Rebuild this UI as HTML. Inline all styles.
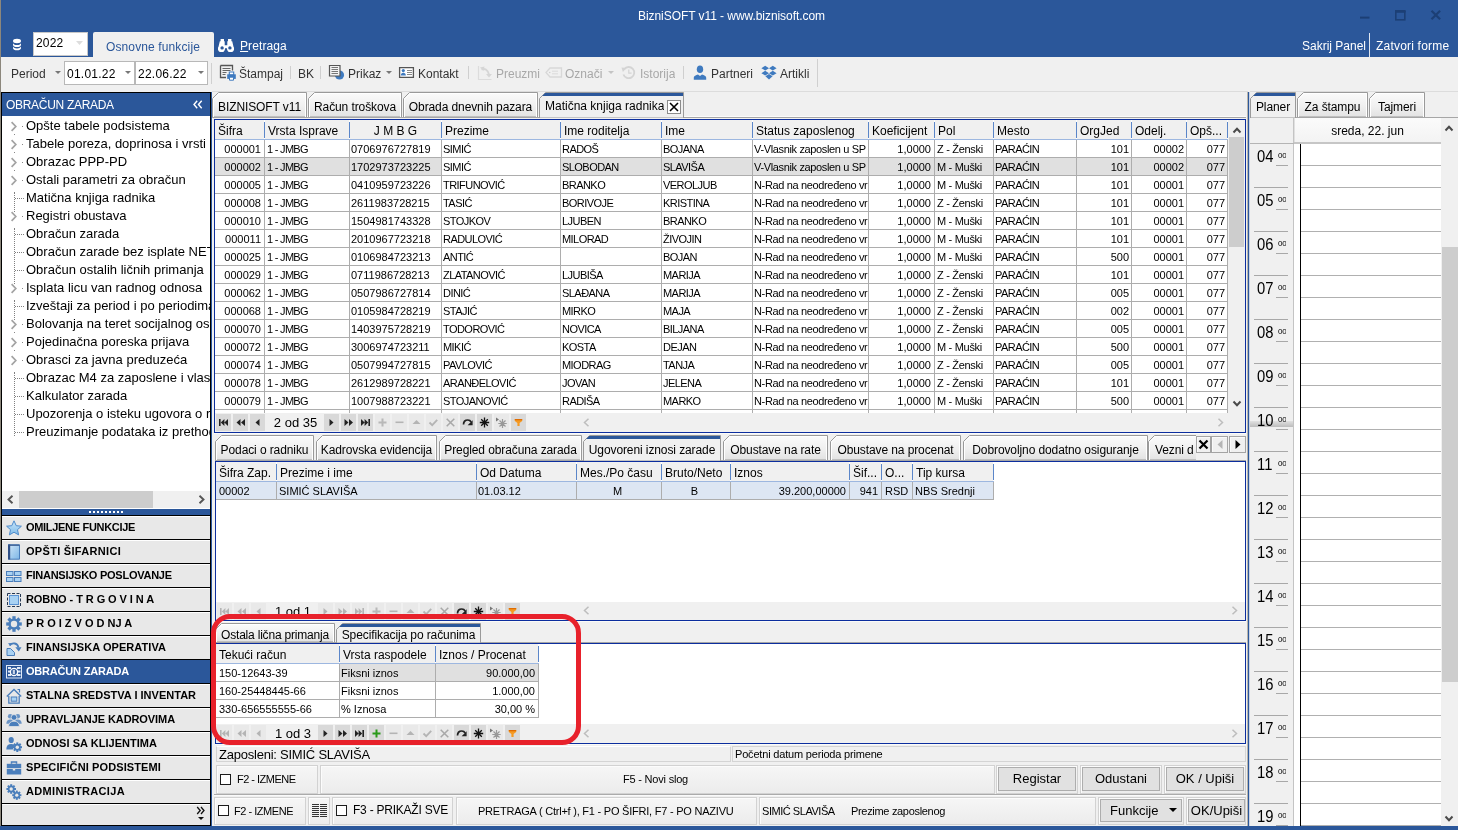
<!DOCTYPE html><html><head><meta charset="utf-8"><title>BizniSOFT v11</title><style>
html,body{margin:0;padding:0}
body{width:1458px;height:830px;overflow:hidden;position:relative;background:#f0f0f0;font-family:"Liberation Sans","DejaVu Sans",sans-serif;font-size:12px;color:#000}
div,span{box-sizing:border-box}
.a{position:absolute;white-space:nowrap;overflow:hidden}
.t11{font-size:11px;line-height:17px}
.t12{font-size:12px;line-height:16px}
.t13{font-size:13px;line-height:17px}
.w{color:#fff}
.cell{position:absolute;white-space:nowrap;overflow:hidden;font-size:11px;line-height:18px;height:18px;border-right:1px solid #adadad;border-bottom:1px solid #adadad;padding:0 3px 0 3px;background:#fff}
.cell.r{text-align:right;padding-right:3px}
.cell.c{text-align:center}
.hd{position:absolute;white-space:nowrap;overflow:hidden;font-size:12px;line-height:22px;height:19px;padding-left:3px;background:#f0f0f0}
.hsep{position:absolute;width:1px;background:#5b86c9}
.tab{position:absolute;white-space:nowrap;overflow:hidden;font-size:12px;line-height:20px;text-align:center;background:linear-gradient(#f6f6f6,#ebebeb);border:1px solid #a0a0a0;border-bottom:none;box-shadow:inset 1px 1px 0 #fff, inset -1px 0 0 #fff}
.tab.sel{background:#f0f0f0;border-top:3px solid #2b579a;line-height:17px}
.nb{position:absolute;width:15px;height:17px;background:#e9e9e9}
.nb.on{background:#d9d9d9}
.navbtn{position:absolute;left:2px;width:208px;height:24px;background:#e8e8e8;border-top:1px solid #fff;border-bottom:1px solid #000;font-weight:bold;font-size:11px;line-height:21px;padding-left:24px;white-space:nowrap;overflow:hidden}
.navbtn.sel{background:#2b579a;color:#fff;border-top-color:#2b579a}
.tree{position:absolute;left:26px;font-size:13px;line-height:18px;white-space:nowrap}
.btn{position:absolute;background:#e1e1e1;border:1px solid #adadad;font-size:13px;text-align:center;white-space:nowrap;overflow:hidden}
.pnl{position:absolute;border:1px solid #d2d2d2;box-shadow:inset 1px 1px 0 #fcfcfc;background:linear-gradient(#f6f6f6,#ececec)}
.chk{position:absolute;width:11px;height:11px;border:1px solid #1c1c1c;background:#fff}
</style></head><body>
<div class="a" style="left:0px;top:0px;width:1458px;height:57px;background:#2b579a"></div>
<div class="a" style="left:0px;top:0px;width:1px;height:830px;background:#8c877c"></div>
<div class="a t12 w" style="left:638px;top:8px;letter-spacing:-0.06px">BizniSOFT v11 - www.biznisoft.com</div>
<svg class="a" style="left:1355px;top:5px" width="100" height="24" viewBox="0 0 100 24"><g stroke="#1c3f75" stroke-width="1.6" fill="none"><path d="M5 12.6h9.5" stroke-width="2"/><rect x="40.8" y="6.8" width="9" height="8"/><path d="M40 6.2h10.6" stroke-width="2.4"/><path d="M76.5 5.7l8.6 8.6M85.1 5.7l-8.6 8.6" stroke-width="2.2"/></g></svg>
<svg class="a" style="left:12px;top:38px" width="10" height="13" viewBox="0 0 10 13"><g fill="#fff"><ellipse cx="5" cy="3" rx="4" ry="2.2"/><path d="M1 5c0 1.2 1.8 2.1 4 2.1s4-0.9 4-2.1v1.9c0 1.2-1.8 2.1-4 2.1s-4-0.9-4-2.1z"/><path d="M1 8.3c0 1.2 1.8 2.1 4 2.1s4-0.9 4-2.1v1.9c0 1.2-1.8 2.1-4 2.1s-4-0.9-4-2.1z"/></g></svg>
<div class="a" style="left:33px;top:32px;width:55px;height:24px;background:#fff;border:1px solid #c8c8c8"></div>
<div class="a t12" style="left:36px;top:36px;line-height:15px;letter-spacing:0.2px">2022</div>
<svg class="a" style="left:76px;top:41px" width="7" height="4"><path d="M0 0h7l-3.5 4z" fill="#ddd"/></svg>
<div class="a" style="left:93px;top:32px;width:121px;height:25px;background:#f0f0f0;border-radius:2px 2px 0 0"></div>
<div class="a t12" style="left:106px;top:39px;color:#2b579a;line-height:16px;letter-spacing:0.12px">Osnovne funkcije</div>
<svg class="a" style="left:218px;top:38px" width="16" height="14" viewBox="0 0 16 14"><g fill="#fff"><path d="M2.6 1h3.4v3h-3.4zM10 1h3.4v3H10z"/><path d="M1.8 3.2h4.9v4h2.6v-4h4.9l1.3 5.5a3.6 3.6 0 1 1-6.5 1.5h-2a3.6 3.6 0 1 1-6.5-1.5z"/></g><circle cx="4.1" cy="9.9" r="1.7" fill="#2b579a"/><circle cx="11.9" cy="9.9" r="1.7" fill="#2b579a"/></svg>
<div class="a t12 w" style="left:240px;top:38px;line-height:16px;letter-spacing:0.1px"><u>P</u>retraga</div>
<div class="a t12 w" style="left:1302px;top:38px;line-height:16px">Sakrij Panel</div>
<div class="a" style="left:1369px;top:33px;width:1px;height:24px;background:#dfe6f0"></div>
<div class="a t12 w" style="left:1376px;top:38px;line-height:16px;letter-spacing:0.2px">Zatvori forme</div>
<div class="a t12" style="left:11px;top:66px;color:#333;line-height:16px">Period</div>
<svg class="a" style="left:55px;top:71px" width="6" height="3"><path d="M0 0h6l-3 3z" fill="#777"/></svg>
<div class="a" style="left:64px;top:61px;width:71px;height:24px;background:#fff;border:1px solid #b8b8b8"></div>
<div class="a t12" style="left:67px;top:66px;line-height:16px;letter-spacing:0.25px">01.01.22</div>
<svg class="a" style="left:125px;top:71px" width="6" height="3"><path d="M0 0h6l-3 3z" fill="#777"/></svg>
<div class="a" style="left:135px;top:61px;width:73px;height:24px;background:#fff;border:1px solid #b8b8b8"></div>
<div class="a t12" style="left:138px;top:66px;line-height:16px;letter-spacing:0.25px">22.06.22</div>
<svg class="a" style="left:198px;top:71px" width="6" height="3"><path d="M0 0h6l-3 3z" fill="#777"/></svg>
<div class="a" style="left:211px;top:63px;width:1px;height:21px;background:#d0d0d0"></div>
<div class="a" style="left:817px;top:59px;width:1px;height:28px;background:#d0d0d0"></div>
<div class="a" style="left:290px;top:66px;width:1px;height:13px;background:#cfcfcf"></div>
<div class="a" style="left:320px;top:66px;width:1px;height:13px;background:#cfcfcf"></div>
<div class="a" style="left:468px;top:66px;width:1px;height:13px;background:#cfcfcf"></div>
<div class="a" style="left:683px;top:66px;width:1px;height:13px;background:#cfcfcf"></div>
<div class="a t12" style="left:239px;top:66px;color:#333;line-height:16px">Štampaj</div>
<div class="a t12" style="left:298px;top:66px;color:#333;line-height:16px">BK</div>
<div class="a t12" style="left:348px;top:66px;color:#333;line-height:16px">Prikaz</div>
<div class="a t12" style="left:418px;top:66px;color:#333;line-height:16px">Kontakt</div>
<div class="a t12" style="left:496px;top:66px;color:#a8a8a8;line-height:16px">Preuzmi</div>
<div class="a t12" style="left:565px;top:66px;color:#a8a8a8;line-height:16px">Označi</div>
<div class="a t12" style="left:640px;top:66px;color:#a8a8a8;line-height:16px">Istorija</div>
<div class="a t12" style="left:711px;top:66px;color:#333;line-height:16px">Partneri</div>
<div class="a t12" style="left:780px;top:66px;color:#333;line-height:16px">Artikli</div>
<svg class="a" style="left:219px;top:64px" width="19" height="18" viewBox="0 0 19 18"><path d="M1.5 1.5h12v5M7 13.5H1.5v-12" stroke="#555" stroke-width="1.3" fill="none"/><path d="M3.5 4.5h8M3.5 6.5h8M3.5 8.5h4M3.5 10.5h3" stroke="#666" stroke-width="1"/><path d="M10.3 8h4.4v3h-4.4z" fill="#fff" stroke="#3f7abf" stroke-width="1.1"/><path d="M8.2 10.3h8.6v4.6H8.2z" fill="#3f7abf"/><path d="M10.5 13.2h4v3h-4z" fill="#fff" stroke="#3f7abf" stroke-width="1"/></svg>
<svg class="a" style="left:328px;top:64px" width="18" height="17" viewBox="0 0 18 17"><circle cx="11.5" cy="11" r="4.6" fill="#3f7abf"/><path d="M1.5 1.5h10.5v10.5H1.5z" fill="#f4f4f4" stroke="#555" stroke-width="1.2"/><path d="M3.5 3.5h6.5M3.5 5.5h6.5M3.5 7.5h6.5M3.5 9.5h6.5" stroke="#777" stroke-width="1"/></svg>
<svg class="a" style="left:398px;top:66px" width="17" height="13" viewBox="0 0 17 13"><path d="M1.6 1.6h13.8v9.8H1.6z" fill="#fff" stroke="#555" stroke-width="1.3"/><circle cx="5.3" cy="4.6" r="1.6" fill="#3f7abf"/><path d="M2.8 9.6c0-2 1-2.8 2.5-2.8s2.5 0.8 2.5 2.8z" fill="#3f7abf"/><path d="M9 4.5h5M9 6.5h5M9 8.5h5" stroke="#888" stroke-width="1"/></svg>
<svg class="a" style="left:477px;top:64px" width="17" height="18" viewBox="0 0 17 18"><path d="M1.5 2v13.5h13" stroke="#dcdcdc" stroke-width="1.2" fill="none"/><path d="M4.5 5.5c3.5-1.5 6.5 0.5 7.5 5" stroke="#d6d6d6" stroke-width="1.8" fill="none"/><path d="M9 10h6l-3 3.5z" fill="#d6d6d6"/><path d="M3 3.5l4.5-1-1 4.5z" fill="#d6d6d6"/></svg>
<svg class="a" style="left:545px;top:66px" width="18" height="13" viewBox="0 0 18 13"><path d="M1 6.5L5 2h11.5v9H5z" fill="none" stroke="#d8d8d8" stroke-width="1.3"/><path d="M7 5.2h6M7 7.8h6" stroke="#dadada" stroke-width="1"/><circle cx="4.7" cy="6.5" r="0.8" fill="#d0d0d0"/></svg>
<svg class="a" style="left:621px;top:65px" width="15" height="15" viewBox="0 0 15 15"><path d="M3.2 4.2A5.6 5.6 0 1 1 2.4 9.5" stroke="#d4d4d4" stroke-width="1.8" fill="none"/><path d="M0.5 2.5l5 0.6-3.6 3.8z" fill="#d4d4d4"/><path d="M7.8 4.5v3.6h2.8" stroke="#d4d4d4" stroke-width="1.2" fill="none"/></svg>
<svg class="a" style="left:693px;top:65px" width="14" height="15" viewBox="0 0 14 15"><ellipse cx="7" cy="4.2" rx="3.2" ry="3.8" fill="#3f7abf"/><path d="M0.8 14.8v-2.2c0-1.8 2.2-2.6 4.2-3.2l2 1.6 2-1.6c2 0.6 4.2 1.4 4.2 3.2v2.2z" fill="#3f7abf"/></svg>
<svg class="a" style="left:761px;top:65px" width="16" height="15" viewBox="0 0 16 15"><g fill="#3f7abf"><path d="M4.2 0.8L8 3.2 4.2 5.6 0.4 3.2z"/><path d="M11.8 0.8l3.8 2.4-3.8 2.4L8 3.2z"/><path d="M4.2 5.8L8 8.2 4.2 10.6 0.4 8.2z"/><path d="M11.8 5.8l3.8 2.4-3.8 2.4L8 8.2z"/><path d="M8 9l3.6 2.3L8 14.4 4.4 11.3z"/></g></svg>
<div class="a" style="left:1px;top:92px;width:210px;height:734px;background:#fff;border:1px solid #000"></div>
<div class="a" style="left:211px;top:92px;width:1px;height:734px;background:#2b579a"></div>
<div class="a" style="left:2px;top:93px;width:208px;height:23px;background:#2b579a"></div>
<div class="a t12 w" style="left:6px;top:96px;line-height:18px;letter-spacing:-0.3px">OBRAČUN ZARADA</div>
<svg class="a" style="left:193px;top:100px" width="10" height="9"><path d="M4.2 0.8L1 4.5l3.2 3.7M8.7 0.8L5.5 4.5l3.2 3.7" stroke="#fff" stroke-width="1.4" fill="none"/></svg>
<div class="a" style="left:2px;top:116px;width:208px;height:375px">
<div class="tree" style="left:24px;top:1px">Opšte tabele podsistema</div>
<svg class="a" style="left:8px;top:5px" width="8" height="11"><path d="M1.6 1.2l4.2 4.3-4.2 4.3" stroke="#a3a3a3" stroke-width="1.7" fill="none"/></svg>
<div class="a" style="left:20px;top:10px;width:1px;height:1px;background:#888"></div>
<div class="a" style="left:12px;top:18px;width:1px;height:1px;background:#888"></div>
<div class="tree" style="left:24px;top:19px">Tabele poreza, doprinosa i vrsti</div>
<svg class="a" style="left:8px;top:23px" width="8" height="11"><path d="M1.6 1.2l4.2 4.3-4.2 4.3" stroke="#a3a3a3" stroke-width="1.7" fill="none"/></svg>
<div class="a" style="left:20px;top:28px;width:1px;height:1px;background:#888"></div>
<div class="a" style="left:12px;top:36px;width:1px;height:1px;background:#888"></div>
<div class="tree" style="left:24px;top:37px">Obrazac PPP-PD</div>
<svg class="a" style="left:8px;top:41px" width="8" height="11"><path d="M1.6 1.2l4.2 4.3-4.2 4.3" stroke="#a3a3a3" stroke-width="1.7" fill="none"/></svg>
<div class="a" style="left:20px;top:46px;width:1px;height:1px;background:#888"></div>
<div class="a" style="left:12px;top:54px;width:1px;height:1px;background:#888"></div>
<div class="tree" style="left:24px;top:55px">Ostali parametri za obračun</div>
<svg class="a" style="left:8px;top:59px" width="8" height="11"><path d="M1.6 1.2l4.2 4.3-4.2 4.3" stroke="#a3a3a3" stroke-width="1.7" fill="none"/></svg>
<div class="a" style="left:20px;top:64px;width:1px;height:1px;background:#888"></div>
<div class="tree" style="left:24px;top:73px">Matična knjiga radnika</div>
<div class="a" style="left:13px;top:82px;width:9px;height:0;border-top:1px dotted #808080"></div>
<div class="tree" style="left:24px;top:91px">Registri obustava</div>
<svg class="a" style="left:8px;top:95px" width="8" height="11"><path d="M1.6 1.2l4.2 4.3-4.2 4.3" stroke="#a3a3a3" stroke-width="1.7" fill="none"/></svg>
<div class="a" style="left:20px;top:100px;width:1px;height:1px;background:#888"></div>
<div class="tree" style="left:24px;top:109px">Obračun zarada</div>
<div class="a" style="left:13px;top:118px;width:9px;height:0;border-top:1px dotted #808080"></div>
<div class="tree" style="left:24px;top:127px">Obračun zarade bez isplate NETO</div>
<div class="a" style="left:13px;top:136px;width:9px;height:0;border-top:1px dotted #808080"></div>
<div class="tree" style="left:24px;top:145px">Obračun ostalih ličnih primanja</div>
<div class="a" style="left:13px;top:154px;width:9px;height:0;border-top:1px dotted #808080"></div>
<div class="tree" style="left:24px;top:163px">Isplata licu van radnog odnosa</div>
<svg class="a" style="left:8px;top:167px" width="8" height="11"><path d="M1.6 1.2l4.2 4.3-4.2 4.3" stroke="#a3a3a3" stroke-width="1.7" fill="none"/></svg>
<div class="a" style="left:20px;top:172px;width:1px;height:1px;background:#888"></div>
<div class="tree" style="left:24px;top:181px">Izveštaji za period i po periodima</div>
<div class="a" style="left:13px;top:190px;width:9px;height:0;border-top:1px dotted #808080"></div>
<div class="tree" style="left:24px;top:199px">Bolovanja na teret socijalnog osiguranja</div>
<svg class="a" style="left:8px;top:203px" width="8" height="11"><path d="M1.6 1.2l4.2 4.3-4.2 4.3" stroke="#a3a3a3" stroke-width="1.7" fill="none"/></svg>
<div class="a" style="left:20px;top:208px;width:1px;height:1px;background:#888"></div>
<div class="a" style="left:12px;top:216px;width:1px;height:1px;background:#888"></div>
<div class="tree" style="left:24px;top:217px">Pojedinačna poreska prijava</div>
<svg class="a" style="left:8px;top:221px" width="8" height="11"><path d="M1.6 1.2l4.2 4.3-4.2 4.3" stroke="#a3a3a3" stroke-width="1.7" fill="none"/></svg>
<div class="a" style="left:20px;top:226px;width:1px;height:1px;background:#888"></div>
<div class="a" style="left:12px;top:234px;width:1px;height:1px;background:#888"></div>
<div class="tree" style="left:24px;top:235px">Obrasci za javna preduzeća</div>
<svg class="a" style="left:8px;top:239px" width="8" height="11"><path d="M1.6 1.2l4.2 4.3-4.2 4.3" stroke="#a3a3a3" stroke-width="1.7" fill="none"/></svg>
<div class="a" style="left:20px;top:244px;width:1px;height:1px;background:#888"></div>
<div class="tree" style="left:24px;top:253px">Obrazac M4 za zaposlene i vlasnike</div>
<div class="a" style="left:13px;top:262px;width:9px;height:0;border-top:1px dotted #808080"></div>
<div class="tree" style="left:24px;top:271px">Kalkulator zarada</div>
<div class="a" style="left:13px;top:280px;width:9px;height:0;border-top:1px dotted #808080"></div>
<div class="tree" style="left:24px;top:289px">Upozorenja o isteku ugovora o radu</div>
<div class="a" style="left:13px;top:298px;width:9px;height:0;border-top:1px dotted #808080"></div>
<div class="tree" style="left:24px;top:307px">Preuzimanje podataka iz prethodne</div>
<div class="a" style="left:13px;top:316px;width:9px;height:0;border-top:1px dotted #808080"></div>
<div class="a" style="left:12px;top:76px;width:0;height:20px;border-left:1px dotted #808080"></div>
<div class="a" style="left:12px;top:112px;width:0;height:56px;border-left:1px dotted #808080"></div>
<div class="a" style="left:12px;top:184px;width:0;height:20px;border-left:1px dotted #808080"></div>
<div class="a" style="left:12px;top:256px;width:0;height:64px;border-left:1px dotted #808080"></div>
</div>
<div class="a" style="left:2px;top:491px;width:208px;height:17px;background:#f0f0f0"></div>
<div class="a" style="left:19px;top:491px;width:134px;height:17px;background:#cdcdcd"></div>
<svg class="a" style="left:7px;top:495px" width="7" height="9"><path d="M5.5 0.8l-4 3.7 4 3.7" stroke="#555" stroke-width="1.9" fill="none"/></svg>
<svg class="a" style="left:198px;top:495px" width="7" height="9"><path d="M1.5 0.8l4 3.7-4 3.7" stroke="#555" stroke-width="1.9" fill="none"/></svg>
<div class="a" style="left:2px;top:509px;width:208px;height:6px;background:#2b579a"></div>
<div class="a" style="left:89px;top:511px;width:34px;height:2px;background:repeating-linear-gradient(90deg,#fff 0 2px,transparent 2px 4px)"></div>
<div class="a" style="left:2px;top:515px;width:208px;height:1px;background:#000"></div>
<div class="navbtn" style="top:516px;letter-spacing:-0.312px">OMILJENE FUNKCIJE</div>
<div class="navbtn" style="top:540px;letter-spacing:0.302px">OPŠTI ŠIFARNICI</div>
<div class="navbtn" style="top:564px;letter-spacing:-0.254px">FINANSIJSKO POSLOVANJE</div>
<div class="navbtn" style="top:588px;letter-spacing:-0.072px">ROBNO - T R G O V I N A</div>
<div class="navbtn" style="top:612px;letter-spacing:-0.008px">P R O I Z V O D NJ A</div>
<div class="navbtn" style="top:636px;letter-spacing:0.075px">FINANSIJSKA OPERATIVA</div>
<div class="navbtn sel" style="top:660px;letter-spacing:-0.194px">OBRAČUN ZARADA</div>
<div class="navbtn" style="top:684px;letter-spacing:0.015px">STALNA SREDSTVA I INVENTAR</div>
<div class="navbtn" style="top:708px;letter-spacing:-0.084px">UPRAVLJANJE KADROVIMA</div>
<div class="navbtn" style="top:732px;letter-spacing:0.03px">ODNOSI SA KLIJENTIMA</div>
<div class="navbtn" style="top:756px;letter-spacing:0.112px">SPECIFIČNI PODSISTEMI</div>
<div class="navbtn" style="top:780px;letter-spacing:0.348px">ADMINISTRACIJA</div>
<div class="a" style="left:2px;top:804px;width:208px;height:21px;background:#e8e8e8;border-top:1px solid #fff"></div>
<svg class="a" style="left:196px;top:806px" width="9" height="9"><path d="M1.2 1l3 3.5-3 3.5M5 1l3 3.5L5 8" stroke="#111" stroke-width="1.3" fill="none"/></svg>
<svg class="a" style="left:198px;top:817px" width="6" height="3"><path d="M0 0h6l-3 3z" fill="#111"/></svg>
<svg class="a" style="left:386px;top:71px" width="6" height="3"><path d="M0 0h6l-3 3z" fill="#777"/></svg>
<svg class="a" style="left:608px;top:71px" width="6" height="3"><path d="M0 0h6l-3 3z" fill="#c4c4c4"/></svg>
<svg class="a" style="left:6px;top:520px" width="16" height="16" viewBox="0 0 16 16"><defs><linearGradient id="sg" x1="0" y1="0" x2="0" y2="1"><stop offset="0" stop-color="#c9e6fa"/><stop offset="1" stop-color="#7fbbe9"/></linearGradient></defs><path d="M8 0.8l2.2 4.9 5.2 0.5-3.9 3.5 1.1 5.2L8 12.2l-4.6 2.7 1.1-5.2L0.6 6.2l5.2-0.5z" fill="url(#sg)" stroke="#4f8ccc" stroke-width="1"/></svg>
<svg class="a" style="left:6px;top:544px" width="16" height="16" viewBox="0 0 16 16"><defs><linearGradient id="bg1" x1="0" y1="0" x2="1" y2="1"><stop offset="0" stop-color="#cfe6f8"/><stop offset="1" stop-color="#7db6e6"/></linearGradient></defs><path d="M2.5 0.8h11v14.4h-11z" fill="url(#bg1)" stroke="#4a7ebb" stroke-width="1"/><path d="M2 0.5h2.2v15H2z" fill="#2f4f86"/><path d="M2.5 1.2h11" stroke="#35588f" stroke-width="1.2"/></svg>
<svg class="a" style="left:6px;top:568px" width="16" height="16" viewBox="0 0 16 16"><g fill="#a9d2f3" stroke="#4a7ebb" stroke-width="1"><rect x="0.5" y="3.5" width="6.5" height="4"/><rect x="8.5" y="3.5" width="6.5" height="4"/><rect x="0.5" y="9.5" width="6.5" height="4"/><rect x="8.5" y="9.5" width="6.5" height="4"/></g></svg>
<svg class="a" style="left:6px;top:592px" width="16" height="16" viewBox="0 0 16 16"><rect x="1.5" y="1.5" width="13" height="13" fill="none" stroke="#243650" stroke-width="1" stroke-dasharray="3 1.5"/><rect x="3.5" y="3.5" width="9" height="9" fill="#a9d2f3" stroke="#5b93d3" stroke-width="1"/></svg>
<svg class="a" style="left:6px;top:616px" width="16" height="16" viewBox="0 0 16 16"><circle cx="8" cy="8" r="5.62" fill="#4a7ebb"/><path d="M12.29 8.00L15.80 8.00" stroke="#4a7ebb" stroke-width="3.28"/><path d="M11.03 11.03L13.52 13.52" stroke="#4a7ebb" stroke-width="3.28"/><path d="M8.00 12.29L8.00 15.80" stroke="#4a7ebb" stroke-width="3.28"/><path d="M4.97 11.03L2.48 13.52" stroke="#4a7ebb" stroke-width="3.28"/><path d="M3.71 8.00L0.20 8.00" stroke="#4a7ebb" stroke-width="3.28"/><path d="M4.97 4.97L2.48 2.48" stroke="#4a7ebb" stroke-width="3.28"/><path d="M8.00 3.71L8.00 0.20" stroke="#4a7ebb" stroke-width="3.28"/><path d="M11.03 4.97L13.52 2.48" stroke="#4a7ebb" stroke-width="3.28"/><circle cx="8" cy="8" r="3.2" fill="#e8e8e8"/></svg>
<svg class="a" style="left:6px;top:640px" width="16" height="16" viewBox="0 0 16 16"><path d="M1 15.5V8.5h3.5l4 4v3z" fill="#a9d2f3" stroke="#4a7ebb" stroke-width="1"/><path d="M3.5 5.5c3-3.5 8-2.5 9 2" stroke="#4a7ebb" stroke-width="1.8" fill="none"/><path d="M9.3 7.2h6.2l-2.7 4.3z" fill="#4a7ebb"/><path d="M2 3.2l3.5-0.2-1 3z" fill="#4a7ebb"/></svg>
<svg class="a" style="left:6px;top:664px" width="16" height="16" viewBox="0 0 16 16"><g fill="#dfe9f7"><rect x="0.5" y="1.5" width="15" height="12.5" fill="none" stroke="#dfe9f7"/><rect x="2" y="3" width="3" height="2"/><rect x="2" y="6.5" width="3" height="2"/><rect x="2" y="10" width="3" height="2"/><rect x="11" y="3" width="3.5" height="2"/><rect x="11" y="6.5" width="3.5" height="2"/><rect x="11" y="10" width="3.5" height="2"/></g><circle cx="8" cy="8" r="3.6" fill="#2b579a" stroke="#fff" stroke-width="1.3"/><path d="M8 5.8v4.4M6.6 7h2.2M6.6 9h2.2" stroke="#fff" stroke-width="1"/></svg>
<svg class="a" style="left:6px;top:688px" width="16" height="16" viewBox="0 0 16 16"><path d="M0.8 8.5L8 1.5l7.2 7" fill="none" stroke="#4a7ebb" stroke-width="1.4"/><path d="M11.5 1.5h2v3" fill="none" stroke="#4a7ebb" stroke-width="1.2"/><path d="M2.8 8v7.2h10.4V8" fill="none" stroke="#4a7ebb" stroke-width="1.3"/><rect x="5.2" y="9" width="5.6" height="4.2" fill="#a9d2f3" stroke="#4a7ebb" stroke-width="1"/></svg>
<svg class="a" style="left:6px;top:712px" width="16" height="16" viewBox="0 0 16 16"><g fill="#4a7ebb"><circle cx="4.2" cy="4.2" r="2.3" opacity="0.8"/><circle cx="11.8" cy="4.2" r="2.3" opacity="0.8"/><path d="M0.3 11.8c0-3 1.6-4.4 3.9-4.4 1 0 1.8 0.3 2.4 0.8v3.6z" opacity="0.8"/><path d="M15.7 11.8c0-3-1.6-4.4-3.9-4.4-1 0-1.8 0.3-2.4 0.8v3.6z" opacity="0.8"/><circle cx="8" cy="5.4" r="2.9" stroke="#e8e8e8" stroke-width="0.8"/><path d="M2.6 14.6c0-3.6 2.2-5.4 5.4-5.4s5.4 1.8 5.4 5.4z" stroke="#e8e8e8" stroke-width="0.8"/></g></svg>
<svg class="a" style="left:6px;top:736px" width="16" height="16" viewBox="0 0 16 16"><g fill="#4a7ebb"><ellipse cx="5.2" cy="4" rx="2.6" ry="3.1"/><path d="M0.3 13.4c0-3.6 1.8-5.4 4.9-5.4 1.3 0 2.3 0.4 3.1 1l-1.5 4.4z"/></g><circle cx="11.3" cy="11.2" r="3.46" fill="#4a7ebb"/><path d="M13.94 11.20L16.10 11.20" stroke="#4a7ebb" stroke-width="2.02"/><path d="M13.17 13.07L14.69 14.59" stroke="#4a7ebb" stroke-width="2.02"/><path d="M11.30 13.84L11.30 16.00" stroke="#4a7ebb" stroke-width="2.02"/><path d="M9.43 13.07L7.91 14.59" stroke="#4a7ebb" stroke-width="2.02"/><path d="M8.66 11.20L6.50 11.20" stroke="#4a7ebb" stroke-width="2.02"/><path d="M9.43 9.33L7.91 7.81" stroke="#4a7ebb" stroke-width="2.02"/><path d="M11.30 8.56L11.30 6.40" stroke="#4a7ebb" stroke-width="2.02"/><path d="M13.17 9.33L14.69 7.81" stroke="#4a7ebb" stroke-width="2.02"/><circle cx="11.3" cy="11.2" r="1.7" fill="#e8e8e8"/></svg>
<svg class="a" style="left:6px;top:760px" width="16" height="16" viewBox="0 0 16 16"><path d="M5.5 3.8V2h5v1.8" fill="none" stroke="#4a7ebb" stroke-width="1.5"/><path d="M0.8 3.8h14.4v4.4H0.8z" fill="#4a7ebb"/><path d="M0.8 9h6v1.4h2.4V9h6v5.4H0.8z" fill="#4a7ebb"/></svg>
<svg class="a" style="left:6px;top:784px" width="16" height="16" viewBox="0 0 16 16"><circle cx="5.2" cy="5" r="3.46" fill="#4a7ebb"/><path d="M7.84 5.00L10.00 5.00" stroke="#4a7ebb" stroke-width="2.02"/><path d="M7.07 6.87L8.59 8.39" stroke="#4a7ebb" stroke-width="2.02"/><path d="M5.20 7.64L5.20 9.80" stroke="#4a7ebb" stroke-width="2.02"/><path d="M3.33 6.87L1.81 8.39" stroke="#4a7ebb" stroke-width="2.02"/><path d="M2.56 5.00L0.40 5.00" stroke="#4a7ebb" stroke-width="2.02"/><path d="M3.33 3.13L1.81 1.61" stroke="#4a7ebb" stroke-width="2.02"/><path d="M5.20 2.36L5.20 0.20" stroke="#4a7ebb" stroke-width="2.02"/><path d="M7.07 3.13L8.59 1.61" stroke="#4a7ebb" stroke-width="2.02"/><circle cx="5.2" cy="5" r="1.7" fill="#e8e8e8"/><circle cx="10.8" cy="11.2" r="3.31" fill="#4a7ebb"/><path d="M13.33 11.20L15.40 11.20" stroke="#4a7ebb" stroke-width="1.93"/><path d="M12.59 12.99L14.05 14.45" stroke="#4a7ebb" stroke-width="1.93"/><path d="M10.80 13.73L10.80 15.80" stroke="#4a7ebb" stroke-width="1.93"/><path d="M9.01 12.99L7.55 14.45" stroke="#4a7ebb" stroke-width="1.93"/><path d="M8.27 11.20L6.20 11.20" stroke="#4a7ebb" stroke-width="1.93"/><path d="M9.01 9.41L7.55 7.95" stroke="#4a7ebb" stroke-width="1.93"/><path d="M10.80 8.67L10.80 6.60" stroke="#4a7ebb" stroke-width="1.93"/><path d="M12.59 9.41L14.05 7.95" stroke="#4a7ebb" stroke-width="1.93"/><circle cx="10.8" cy="11.2" r="1.6" fill="#e8e8e8"/></svg>
<div class="a" style="left:0px;top:826px;width:1458px;height:4px;background:#2b579a"></div>
<div class="a" style="left:212px;top:117px;width:1036px;height:1px;background:#a6a6a6"></div>
<div class="a" style="left:212px;top:116px;width:1036px;height:1px;background:#fbfbfb"></div>
<div class="a" style="left:212px;top:91px;width:1036px;height:1px;background:#dcdcdc"></div>
<svg class="a" style="left:212px;top:92px" width="95" height="25" viewBox="0 0 95 25"><defs><linearGradient id="tg1" x1="0" y1="0" x2="0" y2="1"><stop offset="0" stop-color="#fbfbfb"/><stop offset="0.55" stop-color="#f0f0f0"/><stop offset="1" stop-color="#e2e2e2"/></linearGradient></defs><path d="M0.5 25V6.5L6.5 0.5H94.5V25z" fill="url(#tg1)" stroke="#9a9a9a"/><path d="M1.5 25V7L7 1.5H93.5V25" fill="none" stroke="#fff"/></svg>
<div class="a" style="left:212px;top:94px;width:95px;height:23px;text-align:center;font-size:12px;letter-spacing:-0.1px;line-height:26px">BIZNISOFT v11</div>
<svg class="a" style="left:308px;top:92px" width="94" height="25" viewBox="0 0 94 25"><defs><linearGradient id="tg2" x1="0" y1="0" x2="0" y2="1"><stop offset="0" stop-color="#fbfbfb"/><stop offset="0.55" stop-color="#f0f0f0"/><stop offset="1" stop-color="#e2e2e2"/></linearGradient></defs><path d="M0.5 25V6.5L6.5 0.5H93.5V25z" fill="url(#tg2)" stroke="#9a9a9a"/><path d="M1.5 25V7L7 1.5H92.5V25" fill="none" stroke="#fff"/></svg>
<div class="a" style="left:308px;top:94px;width:94px;height:23px;text-align:center;font-size:12px;letter-spacing:-0.1px;line-height:26px">Račun troškova</div>
<svg class="a" style="left:403px;top:92px" width="135" height="25" viewBox="0 0 135 25"><defs><linearGradient id="tg3" x1="0" y1="0" x2="0" y2="1"><stop offset="0" stop-color="#fbfbfb"/><stop offset="0.55" stop-color="#f0f0f0"/><stop offset="1" stop-color="#e2e2e2"/></linearGradient></defs><path d="M0.5 25V6.5L6.5 0.5H134.5V25z" fill="url(#tg3)" stroke="#9a9a9a"/><path d="M1.5 25V7L7 1.5H133.5V25" fill="none" stroke="#fff"/></svg>
<div class="a" style="left:403px;top:94px;width:135px;height:23px;text-align:center;font-size:12px;letter-spacing:-0.1px;line-height:26px">Obrada dnevnih pazara</div>
<svg class="a" style="left:539px;top:92px" width="145" height="26" viewBox="0 0 145 26"><path d="M0.5 26V6.5L6.5 0.5H144.5V26z" fill="#f0f0f0" stroke="#9a9a9a"/><path d="M6.2 1H144V4H3.2z" fill="#2b579a"/></svg>
<div class="a" style="left:539px;top:94px;width:145px;height:23px;text-align:center;font-size:12px;letter-spacing:-0.1px;line-height:26px"></div>
<div class="a t12" style="left:545px;top:98px;line-height:17px">Matična knjiga radnika</div>
<div class="a" style="left:667px;top:100px;width:14px;height:14px;background:#fff;border:1px solid #8c8c8c"></div>
<svg class="a" style="left:669px;top:102px" width="10" height="10"><path d="M1 1l8 8M9 1l-8 8" stroke="#000" stroke-width="1.6"/></svg>
<div class="a" style="left:214px;top:119px;width:1032px;height:314px;border:1px solid #0c2e9e;background:#f0f0f0;box-shadow:0 1px 0 #fbfbf8"></div>
<div class="a" style="left:215px;top:120px;width:1030px;height:293px;background:#fff"></div>
<div class="a" style="left:0;top:0;width:1228px;height:413px">
<div class="hd" style="left:215px;top:120px;width:49px;">Šifra</div>
<div class="hsep" style="left:264px;top:122px;height:16px"></div>
<div class="hd" style="left:265px;top:120px;width:84px;">Vrsta Isprave</div>
<div class="hsep" style="left:349px;top:122px;height:16px"></div>
<div class="hd" style="left:350px;top:120px;width:91px;text-align:center;padding-left:0">J M B G</div>
<div class="hsep" style="left:441px;top:122px;height:16px"></div>
<div class="hd" style="left:442px;top:120px;width:118px;">Prezime</div>
<div class="hsep" style="left:560px;top:122px;height:16px"></div>
<div class="hd" style="left:561px;top:120px;width:100px;">Ime roditelja</div>
<div class="hsep" style="left:661px;top:122px;height:16px"></div>
<div class="hd" style="left:662px;top:120px;width:90px;">Ime</div>
<div class="hsep" style="left:752px;top:122px;height:16px"></div>
<div class="hd" style="left:753px;top:120px;width:115px;">Status zaposlenog</div>
<div class="hsep" style="left:868px;top:122px;height:16px"></div>
<div class="hd" style="left:869px;top:120px;width:65px;">Koeficijent</div>
<div class="hsep" style="left:934px;top:122px;height:16px"></div>
<div class="hd" style="left:935px;top:120px;width:58px;">Pol</div>
<div class="hsep" style="left:993px;top:122px;height:16px"></div>
<div class="hd" style="left:994px;top:120px;width:82px;">Mesto</div>
<div class="hsep" style="left:1076px;top:122px;height:16px"></div>
<div class="hd" style="left:1077px;top:120px;width:54px;">OrgJed</div>
<div class="hsep" style="left:1131px;top:122px;height:16px"></div>
<div class="hd" style="left:1132px;top:120px;width:54px;">Odelj.</div>
<div class="hsep" style="left:1186px;top:122px;height:16px"></div>
<div class="hd" style="left:1187px;top:120px;width:40px;">Opš...</div>
<div class="hsep" style="left:1227px;top:122px;height:16px"></div>
<div class="a" style="left:215px;top:139px;width:1013px;height:1px;background:#9db7e0"></div>
<div class="cell r" style="left:215px;top:140px;width:50px;padding-right:3px;">000001</div>
<div class="cell" style="left:265px;top:140px;width:85px;padding-left:2px;letter-spacing:-0.7px;">1 - JMBG</div>
<div class="cell" style="left:350px;top:140px;width:92px;padding-left:1px;">0706976727819</div>
<div class="cell" style="left:442px;top:140px;width:119px;padding-left:1px;letter-spacing:-0.55px;">SIMIĆ</div>
<div class="cell" style="left:561px;top:140px;width:101px;padding-left:1px;letter-spacing:-0.55px;">RADOŠ</div>
<div class="cell" style="left:662px;top:140px;width:91px;padding-left:1px;letter-spacing:-0.55px;">BOJANA</div>
<div class="cell" style="left:753px;top:140px;width:116px;padding-left:1px;"><span style="letter-spacing:-0.35px">V-Vlasnik zaposlen u SP</span></div>
<div class="cell r" style="left:869px;top:140px;width:66px;padding-right:3px;">1,0000</div>
<div class="cell" style="left:935px;top:140px;width:59px;padding-left:2px;letter-spacing:-0.3px;">Z - Ženski</div>
<div class="cell" style="left:994px;top:140px;width:83px;padding-left:1px;letter-spacing:-0.55px;">PARAĆIN</div>
<div class="cell r" style="left:1077px;top:140px;width:55px;padding-right:2px;">101</div>
<div class="cell r" style="left:1132px;top:140px;width:55px;padding-right:2px;">00002</div>
<div class="cell r" style="left:1187px;top:140px;width:41px;padding-right:2px;">077</div>
<div class="cell r" style="left:215px;top:158px;width:50px;padding-right:3px;background:#e0e0e0;">000002</div>
<div class="cell" style="left:265px;top:158px;width:85px;padding-left:2px;letter-spacing:-0.7px;background:#e0e0e0;">1 - JMBG</div>
<div class="cell" style="left:350px;top:158px;width:92px;padding-left:1px;background:#e0e0e0;">1702973723225</div>
<div class="cell" style="left:442px;top:158px;width:119px;padding-left:1px;letter-spacing:-0.55px;">SIMIĆ</div>
<div class="cell" style="left:561px;top:158px;width:101px;padding-left:1px;letter-spacing:-0.55px;background:#e0e0e0;">SLOBODAN</div>
<div class="cell" style="left:662px;top:158px;width:91px;padding-left:1px;letter-spacing:-0.55px;background:#e0e0e0;">SLAVIŠA</div>
<div class="cell" style="left:753px;top:158px;width:116px;padding-left:1px;background:#e0e0e0;"><span style="letter-spacing:-0.35px">V-Vlasnik zaposlen u SP</span></div>
<div class="cell r" style="left:869px;top:158px;width:66px;padding-right:3px;background:#e0e0e0;">1,0000</div>
<div class="cell" style="left:935px;top:158px;width:59px;padding-left:2px;letter-spacing:-0.3px;background:#e0e0e0;">M - Muški</div>
<div class="cell" style="left:994px;top:158px;width:83px;padding-left:1px;letter-spacing:-0.55px;background:#e0e0e0;">PARAĆIN</div>
<div class="cell r" style="left:1077px;top:158px;width:55px;padding-right:2px;background:#e0e0e0;">101</div>
<div class="cell r" style="left:1132px;top:158px;width:55px;padding-right:2px;background:#e0e0e0;">00002</div>
<div class="cell r" style="left:1187px;top:158px;width:41px;padding-right:2px;background:#e0e0e0;">077</div>
<div class="cell r" style="left:215px;top:176px;width:50px;padding-right:3px;">000005</div>
<div class="cell" style="left:265px;top:176px;width:85px;padding-left:2px;letter-spacing:-0.7px;">1 - JMBG</div>
<div class="cell" style="left:350px;top:176px;width:92px;padding-left:1px;">0410959723226</div>
<div class="cell" style="left:442px;top:176px;width:119px;padding-left:1px;letter-spacing:-0.55px;">TRIFUNOVIĆ</div>
<div class="cell" style="left:561px;top:176px;width:101px;padding-left:1px;letter-spacing:-0.55px;">BRANKO</div>
<div class="cell" style="left:662px;top:176px;width:91px;padding-left:1px;letter-spacing:-0.55px;">VEROLJUB</div>
<div class="cell" style="left:753px;top:176px;width:116px;padding-left:1px;"><span style="letter-spacing:-0.35px">N-Rad na neodređeno vreme</span></div>
<div class="cell r" style="left:869px;top:176px;width:66px;padding-right:3px;">1,0000</div>
<div class="cell" style="left:935px;top:176px;width:59px;padding-left:2px;letter-spacing:-0.3px;">M - Muški</div>
<div class="cell" style="left:994px;top:176px;width:83px;padding-left:1px;letter-spacing:-0.55px;">PARAĆIN</div>
<div class="cell r" style="left:1077px;top:176px;width:55px;padding-right:2px;">101</div>
<div class="cell r" style="left:1132px;top:176px;width:55px;padding-right:2px;">00001</div>
<div class="cell r" style="left:1187px;top:176px;width:41px;padding-right:2px;">077</div>
<div class="cell r" style="left:215px;top:194px;width:50px;padding-right:3px;">000008</div>
<div class="cell" style="left:265px;top:194px;width:85px;padding-left:2px;letter-spacing:-0.7px;">1 - JMBG</div>
<div class="cell" style="left:350px;top:194px;width:92px;padding-left:1px;">2611983728215</div>
<div class="cell" style="left:442px;top:194px;width:119px;padding-left:1px;letter-spacing:-0.55px;">TASIĆ</div>
<div class="cell" style="left:561px;top:194px;width:101px;padding-left:1px;letter-spacing:-0.55px;">BORIVOJE</div>
<div class="cell" style="left:662px;top:194px;width:91px;padding-left:1px;letter-spacing:-0.55px;">KRISTINA</div>
<div class="cell" style="left:753px;top:194px;width:116px;padding-left:1px;"><span style="letter-spacing:-0.35px">N-Rad na neodređeno vreme</span></div>
<div class="cell r" style="left:869px;top:194px;width:66px;padding-right:3px;">1,0000</div>
<div class="cell" style="left:935px;top:194px;width:59px;padding-left:2px;letter-spacing:-0.3px;">Z - Ženski</div>
<div class="cell" style="left:994px;top:194px;width:83px;padding-left:1px;letter-spacing:-0.55px;">PARAĆIN</div>
<div class="cell r" style="left:1077px;top:194px;width:55px;padding-right:2px;">101</div>
<div class="cell r" style="left:1132px;top:194px;width:55px;padding-right:2px;">00001</div>
<div class="cell r" style="left:1187px;top:194px;width:41px;padding-right:2px;">077</div>
<div class="cell r" style="left:215px;top:212px;width:50px;padding-right:3px;">000010</div>
<div class="cell" style="left:265px;top:212px;width:85px;padding-left:2px;letter-spacing:-0.7px;">1 - JMBG</div>
<div class="cell" style="left:350px;top:212px;width:92px;padding-left:1px;">1504981743328</div>
<div class="cell" style="left:442px;top:212px;width:119px;padding-left:1px;letter-spacing:-0.55px;">STOJKOV</div>
<div class="cell" style="left:561px;top:212px;width:101px;padding-left:1px;letter-spacing:-0.55px;">LJUBEN</div>
<div class="cell" style="left:662px;top:212px;width:91px;padding-left:1px;letter-spacing:-0.55px;">BRANKO</div>
<div class="cell" style="left:753px;top:212px;width:116px;padding-left:1px;"><span style="letter-spacing:-0.35px">N-Rad na neodređeno vreme</span></div>
<div class="cell r" style="left:869px;top:212px;width:66px;padding-right:3px;">1,0000</div>
<div class="cell" style="left:935px;top:212px;width:59px;padding-left:2px;letter-spacing:-0.3px;">M - Muški</div>
<div class="cell" style="left:994px;top:212px;width:83px;padding-left:1px;letter-spacing:-0.55px;">PARAĆIN</div>
<div class="cell r" style="left:1077px;top:212px;width:55px;padding-right:2px;">101</div>
<div class="cell r" style="left:1132px;top:212px;width:55px;padding-right:2px;">00001</div>
<div class="cell r" style="left:1187px;top:212px;width:41px;padding-right:2px;">077</div>
<div class="cell r" style="left:215px;top:230px;width:50px;padding-right:3px;">000011</div>
<div class="cell" style="left:265px;top:230px;width:85px;padding-left:2px;letter-spacing:-0.7px;">1 - JMBG</div>
<div class="cell" style="left:350px;top:230px;width:92px;padding-left:1px;">2010967723218</div>
<div class="cell" style="left:442px;top:230px;width:119px;padding-left:1px;letter-spacing:-0.55px;">RADULOVIĆ</div>
<div class="cell" style="left:561px;top:230px;width:101px;padding-left:1px;letter-spacing:-0.55px;">MILORAD</div>
<div class="cell" style="left:662px;top:230px;width:91px;padding-left:1px;letter-spacing:-0.55px;">ŽIVOJIN</div>
<div class="cell" style="left:753px;top:230px;width:116px;padding-left:1px;"><span style="letter-spacing:-0.35px">N-Rad na neodređeno vreme</span></div>
<div class="cell r" style="left:869px;top:230px;width:66px;padding-right:3px;">1,0000</div>
<div class="cell" style="left:935px;top:230px;width:59px;padding-left:2px;letter-spacing:-0.3px;">M - Muški</div>
<div class="cell" style="left:994px;top:230px;width:83px;padding-left:1px;letter-spacing:-0.55px;">PARAĆIN</div>
<div class="cell r" style="left:1077px;top:230px;width:55px;padding-right:2px;">101</div>
<div class="cell r" style="left:1132px;top:230px;width:55px;padding-right:2px;">00001</div>
<div class="cell r" style="left:1187px;top:230px;width:41px;padding-right:2px;">077</div>
<div class="cell r" style="left:215px;top:248px;width:50px;padding-right:3px;">000025</div>
<div class="cell" style="left:265px;top:248px;width:85px;padding-left:2px;letter-spacing:-0.7px;">1 - JMBG</div>
<div class="cell" style="left:350px;top:248px;width:92px;padding-left:1px;">0106984723213</div>
<div class="cell" style="left:442px;top:248px;width:119px;padding-left:1px;letter-spacing:-0.55px;">ANTIĆ</div>
<div class="cell" style="left:561px;top:248px;width:101px;padding-left:1px;letter-spacing:-0.55px;"></div>
<div class="cell" style="left:662px;top:248px;width:91px;padding-left:1px;letter-spacing:-0.55px;">BOJAN</div>
<div class="cell" style="left:753px;top:248px;width:116px;padding-left:1px;"><span style="letter-spacing:-0.35px">N-Rad na neodređeno vreme</span></div>
<div class="cell r" style="left:869px;top:248px;width:66px;padding-right:3px;">1,0000</div>
<div class="cell" style="left:935px;top:248px;width:59px;padding-left:2px;letter-spacing:-0.3px;">M - Muški</div>
<div class="cell" style="left:994px;top:248px;width:83px;padding-left:1px;letter-spacing:-0.55px;">PARAĆIN</div>
<div class="cell r" style="left:1077px;top:248px;width:55px;padding-right:2px;">500</div>
<div class="cell r" style="left:1132px;top:248px;width:55px;padding-right:2px;">00001</div>
<div class="cell r" style="left:1187px;top:248px;width:41px;padding-right:2px;">077</div>
<div class="cell r" style="left:215px;top:266px;width:50px;padding-right:3px;">000029</div>
<div class="cell" style="left:265px;top:266px;width:85px;padding-left:2px;letter-spacing:-0.7px;">1 - JMBG</div>
<div class="cell" style="left:350px;top:266px;width:92px;padding-left:1px;">0711986728213</div>
<div class="cell" style="left:442px;top:266px;width:119px;padding-left:1px;letter-spacing:-0.55px;">ZLATANOVIĆ</div>
<div class="cell" style="left:561px;top:266px;width:101px;padding-left:1px;letter-spacing:-0.55px;">LJUBIŠA</div>
<div class="cell" style="left:662px;top:266px;width:91px;padding-left:1px;letter-spacing:-0.55px;">MARIJA</div>
<div class="cell" style="left:753px;top:266px;width:116px;padding-left:1px;"><span style="letter-spacing:-0.35px">N-Rad na neodređeno vreme</span></div>
<div class="cell r" style="left:869px;top:266px;width:66px;padding-right:3px;">1,0000</div>
<div class="cell" style="left:935px;top:266px;width:59px;padding-left:2px;letter-spacing:-0.3px;">Z - Ženski</div>
<div class="cell" style="left:994px;top:266px;width:83px;padding-left:1px;letter-spacing:-0.55px;">PARAĆIN</div>
<div class="cell r" style="left:1077px;top:266px;width:55px;padding-right:2px;">101</div>
<div class="cell r" style="left:1132px;top:266px;width:55px;padding-right:2px;">00001</div>
<div class="cell r" style="left:1187px;top:266px;width:41px;padding-right:2px;">077</div>
<div class="cell r" style="left:215px;top:284px;width:50px;padding-right:3px;">000062</div>
<div class="cell" style="left:265px;top:284px;width:85px;padding-left:2px;letter-spacing:-0.7px;">1 - JMBG</div>
<div class="cell" style="left:350px;top:284px;width:92px;padding-left:1px;">0507986727814</div>
<div class="cell" style="left:442px;top:284px;width:119px;padding-left:1px;letter-spacing:-0.55px;">DINIĆ</div>
<div class="cell" style="left:561px;top:284px;width:101px;padding-left:1px;letter-spacing:-0.55px;">SLAĐANA</div>
<div class="cell" style="left:662px;top:284px;width:91px;padding-left:1px;letter-spacing:-0.55px;">MARIJA</div>
<div class="cell" style="left:753px;top:284px;width:116px;padding-left:1px;"><span style="letter-spacing:-0.35px">N-Rad na neodređeno vreme</span></div>
<div class="cell r" style="left:869px;top:284px;width:66px;padding-right:3px;">1,0000</div>
<div class="cell" style="left:935px;top:284px;width:59px;padding-left:2px;letter-spacing:-0.3px;">Z - Ženski</div>
<div class="cell" style="left:994px;top:284px;width:83px;padding-left:1px;letter-spacing:-0.55px;">PARAĆIN</div>
<div class="cell r" style="left:1077px;top:284px;width:55px;padding-right:2px;">005</div>
<div class="cell r" style="left:1132px;top:284px;width:55px;padding-right:2px;">00001</div>
<div class="cell r" style="left:1187px;top:284px;width:41px;padding-right:2px;">077</div>
<div class="cell r" style="left:215px;top:302px;width:50px;padding-right:3px;">000068</div>
<div class="cell" style="left:265px;top:302px;width:85px;padding-left:2px;letter-spacing:-0.7px;">1 - JMBG</div>
<div class="cell" style="left:350px;top:302px;width:92px;padding-left:1px;">0105984728219</div>
<div class="cell" style="left:442px;top:302px;width:119px;padding-left:1px;letter-spacing:-0.55px;">STAJIĆ</div>
<div class="cell" style="left:561px;top:302px;width:101px;padding-left:1px;letter-spacing:-0.55px;">MIRKO</div>
<div class="cell" style="left:662px;top:302px;width:91px;padding-left:1px;letter-spacing:-0.55px;">MAJA</div>
<div class="cell" style="left:753px;top:302px;width:116px;padding-left:1px;"><span style="letter-spacing:-0.35px">N-Rad na neodređeno vreme</span></div>
<div class="cell r" style="left:869px;top:302px;width:66px;padding-right:3px;">1,0000</div>
<div class="cell" style="left:935px;top:302px;width:59px;padding-left:2px;letter-spacing:-0.3px;">Z - Ženski</div>
<div class="cell" style="left:994px;top:302px;width:83px;padding-left:1px;letter-spacing:-0.55px;">PARAĆIN</div>
<div class="cell r" style="left:1077px;top:302px;width:55px;padding-right:2px;">002</div>
<div class="cell r" style="left:1132px;top:302px;width:55px;padding-right:2px;">00001</div>
<div class="cell r" style="left:1187px;top:302px;width:41px;padding-right:2px;">077</div>
<div class="cell r" style="left:215px;top:320px;width:50px;padding-right:3px;">000070</div>
<div class="cell" style="left:265px;top:320px;width:85px;padding-left:2px;letter-spacing:-0.7px;">1 - JMBG</div>
<div class="cell" style="left:350px;top:320px;width:92px;padding-left:1px;">1403975728219</div>
<div class="cell" style="left:442px;top:320px;width:119px;padding-left:1px;letter-spacing:-0.55px;">TODOROVIĆ</div>
<div class="cell" style="left:561px;top:320px;width:101px;padding-left:1px;letter-spacing:-0.55px;">NOVICA</div>
<div class="cell" style="left:662px;top:320px;width:91px;padding-left:1px;letter-spacing:-0.55px;">BILJANA</div>
<div class="cell" style="left:753px;top:320px;width:116px;padding-left:1px;"><span style="letter-spacing:-0.35px">N-Rad na neodređeno vreme</span></div>
<div class="cell r" style="left:869px;top:320px;width:66px;padding-right:3px;">1,0000</div>
<div class="cell" style="left:935px;top:320px;width:59px;padding-left:2px;letter-spacing:-0.3px;">Z - Ženski</div>
<div class="cell" style="left:994px;top:320px;width:83px;padding-left:1px;letter-spacing:-0.55px;">PARAĆIN</div>
<div class="cell r" style="left:1077px;top:320px;width:55px;padding-right:2px;">005</div>
<div class="cell r" style="left:1132px;top:320px;width:55px;padding-right:2px;">00001</div>
<div class="cell r" style="left:1187px;top:320px;width:41px;padding-right:2px;">077</div>
<div class="cell r" style="left:215px;top:338px;width:50px;padding-right:3px;">000072</div>
<div class="cell" style="left:265px;top:338px;width:85px;padding-left:2px;letter-spacing:-0.7px;">1 - JMBG</div>
<div class="cell" style="left:350px;top:338px;width:92px;padding-left:1px;">3006974723211</div>
<div class="cell" style="left:442px;top:338px;width:119px;padding-left:1px;letter-spacing:-0.55px;">MIKIĆ</div>
<div class="cell" style="left:561px;top:338px;width:101px;padding-left:1px;letter-spacing:-0.55px;">KOSTA</div>
<div class="cell" style="left:662px;top:338px;width:91px;padding-left:1px;letter-spacing:-0.55px;">DEJAN</div>
<div class="cell" style="left:753px;top:338px;width:116px;padding-left:1px;"><span style="letter-spacing:-0.35px">N-Rad na neodređeno vreme</span></div>
<div class="cell r" style="left:869px;top:338px;width:66px;padding-right:3px;">1,0000</div>
<div class="cell" style="left:935px;top:338px;width:59px;padding-left:2px;letter-spacing:-0.3px;">M - Muški</div>
<div class="cell" style="left:994px;top:338px;width:83px;padding-left:1px;letter-spacing:-0.55px;">PARAĆIN</div>
<div class="cell r" style="left:1077px;top:338px;width:55px;padding-right:2px;">500</div>
<div class="cell r" style="left:1132px;top:338px;width:55px;padding-right:2px;">00001</div>
<div class="cell r" style="left:1187px;top:338px;width:41px;padding-right:2px;">077</div>
<div class="cell r" style="left:215px;top:356px;width:50px;padding-right:3px;">000074</div>
<div class="cell" style="left:265px;top:356px;width:85px;padding-left:2px;letter-spacing:-0.7px;">1 - JMBG</div>
<div class="cell" style="left:350px;top:356px;width:92px;padding-left:1px;">0507994727815</div>
<div class="cell" style="left:442px;top:356px;width:119px;padding-left:1px;letter-spacing:-0.55px;">PAVLOVIĆ</div>
<div class="cell" style="left:561px;top:356px;width:101px;padding-left:1px;letter-spacing:-0.55px;">MIODRAG</div>
<div class="cell" style="left:662px;top:356px;width:91px;padding-left:1px;letter-spacing:-0.55px;">TANJA</div>
<div class="cell" style="left:753px;top:356px;width:116px;padding-left:1px;"><span style="letter-spacing:-0.35px">N-Rad na neodređeno vreme</span></div>
<div class="cell r" style="left:869px;top:356px;width:66px;padding-right:3px;">1,0000</div>
<div class="cell" style="left:935px;top:356px;width:59px;padding-left:2px;letter-spacing:-0.3px;">Z - Ženski</div>
<div class="cell" style="left:994px;top:356px;width:83px;padding-left:1px;letter-spacing:-0.55px;">PARAĆIN</div>
<div class="cell r" style="left:1077px;top:356px;width:55px;padding-right:2px;">005</div>
<div class="cell r" style="left:1132px;top:356px;width:55px;padding-right:2px;">00001</div>
<div class="cell r" style="left:1187px;top:356px;width:41px;padding-right:2px;">077</div>
<div class="cell r" style="left:215px;top:374px;width:50px;padding-right:3px;">000078</div>
<div class="cell" style="left:265px;top:374px;width:85px;padding-left:2px;letter-spacing:-0.7px;">1 - JMBG</div>
<div class="cell" style="left:350px;top:374px;width:92px;padding-left:1px;">2612989728221</div>
<div class="cell" style="left:442px;top:374px;width:119px;padding-left:1px;letter-spacing:-0.55px;">ARANĐELOVIĆ</div>
<div class="cell" style="left:561px;top:374px;width:101px;padding-left:1px;letter-spacing:-0.55px;">JOVAN</div>
<div class="cell" style="left:662px;top:374px;width:91px;padding-left:1px;letter-spacing:-0.55px;">JELENA</div>
<div class="cell" style="left:753px;top:374px;width:116px;padding-left:1px;"><span style="letter-spacing:-0.35px">N-Rad na neodređeno vreme</span></div>
<div class="cell r" style="left:869px;top:374px;width:66px;padding-right:3px;">1,0000</div>
<div class="cell" style="left:935px;top:374px;width:59px;padding-left:2px;letter-spacing:-0.3px;">Z - Ženski</div>
<div class="cell" style="left:994px;top:374px;width:83px;padding-left:1px;letter-spacing:-0.55px;">PARAĆIN</div>
<div class="cell r" style="left:1077px;top:374px;width:55px;padding-right:2px;">101</div>
<div class="cell r" style="left:1132px;top:374px;width:55px;padding-right:2px;">00001</div>
<div class="cell r" style="left:1187px;top:374px;width:41px;padding-right:2px;">077</div>
<div class="cell r" style="left:215px;top:392px;width:50px;padding-right:3px;">000079</div>
<div class="cell" style="left:265px;top:392px;width:85px;padding-left:2px;letter-spacing:-0.7px;">1 - JMBG</div>
<div class="cell" style="left:350px;top:392px;width:92px;padding-left:1px;">1007988723221</div>
<div class="cell" style="left:442px;top:392px;width:119px;padding-left:1px;letter-spacing:-0.55px;">STOJANOVIĆ</div>
<div class="cell" style="left:561px;top:392px;width:101px;padding-left:1px;letter-spacing:-0.55px;">RADIŠA</div>
<div class="cell" style="left:662px;top:392px;width:91px;padding-left:1px;letter-spacing:-0.55px;">MARKO</div>
<div class="cell" style="left:753px;top:392px;width:116px;padding-left:1px;"><span style="letter-spacing:-0.35px">N-Rad na neodređeno vreme</span></div>
<div class="cell r" style="left:869px;top:392px;width:66px;padding-right:3px;">1,0000</div>
<div class="cell" style="left:935px;top:392px;width:59px;padding-left:2px;letter-spacing:-0.3px;">M - Muški</div>
<div class="cell" style="left:994px;top:392px;width:83px;padding-left:1px;letter-spacing:-0.55px;">PARAĆIN</div>
<div class="cell r" style="left:1077px;top:392px;width:55px;padding-right:2px;">500</div>
<div class="cell r" style="left:1132px;top:392px;width:55px;padding-right:2px;">00001</div>
<div class="cell r" style="left:1187px;top:392px;width:41px;padding-right:2px;">077</div>
<div class="cell r" style="left:215px;top:410px;width:50px;padding-right:3px;">000080</div>
<div class="cell" style="left:265px;top:410px;width:85px;padding-left:2px;letter-spacing:-0.7px;">1 - JMBG</div>
<div class="cell" style="left:350px;top:410px;width:92px;padding-left:1px;">1205990723224</div>
<div class="cell" style="left:442px;top:410px;width:119px;padding-left:1px;letter-spacing:-0.55px;">ILIĆ</div>
<div class="cell" style="left:561px;top:410px;width:101px;padding-left:1px;letter-spacing:-0.55px;">DRAGAN</div>
<div class="cell" style="left:662px;top:410px;width:91px;padding-left:1px;letter-spacing:-0.55px;">ŽELJKO</div>
<div class="cell" style="left:753px;top:410px;width:116px;padding-left:1px;"><span style="letter-spacing:-0.35px">N-Rad na neodređeno vreme</span></div>
<div class="cell r" style="left:869px;top:410px;width:66px;padding-right:3px;">1,0000</div>
<div class="cell" style="left:935px;top:410px;width:59px;padding-left:2px;letter-spacing:-0.3px;">M - Muški</div>
<div class="cell" style="left:994px;top:410px;width:83px;padding-left:1px;letter-spacing:-0.55px;">PARAĆIN</div>
<div class="cell r" style="left:1077px;top:410px;width:55px;padding-right:2px;">101</div>
<div class="cell r" style="left:1132px;top:410px;width:55px;padding-right:2px;">00001</div>
<div class="cell r" style="left:1187px;top:410px;width:41px;padding-right:2px;">077</div>
</div>
<div class="a" style="left:1228px;top:120px;width:17px;height:293px;background:#f0f0f0"></div>
<div class="a" style="left:1229px;top:137px;width:15px;height:110px;background:#cdcdcd"></div>
<svg class="a" style="left:1232px;top:127px" width="10" height="7"><path d="M1.5 5.5l3.5-3.7 3.5 3.7" stroke="#4a4a4a" stroke-width="2" fill="none"/></svg>
<svg class="a" style="left:1232px;top:400px" width="10" height="7"><path d="M1.5 1.5l3.5 3.7 3.5-3.7" stroke="#4a4a4a" stroke-width="2" fill="none"/></svg>
<div class="a" style="left:215px;top:413px;width:1030px;height:19px;background:#f0f0f0"></div>
<div class="nb on" style="left:216px;top:414px"><svg width="15" height="17" viewBox="0 0 15 17" style="display:block"><path d="M3 5h1.6v7H3zM8.4 5v7L4.8 8.5zM12 5v7L8.4 8.5z" fill="#222"/></svg></div>
<div class="nb on" style="left:233px;top:414px"><svg width="15" height="17" viewBox="0 0 15 17" style="display:block"><path d="M7.5 5v7L3.5 8.5zM12 5v7L8 8.5z" fill="#222"/></svg></div>
<div class="nb on" style="left:250px;top:414px"><svg width="15" height="17" viewBox="0 0 15 17" style="display:block"><path d="M9.5 5v7L5.5 8.5z" fill="#222"/></svg></div>
<div class="a t13" style="left:267px;top:414px;width:57px;height:17px;text-align:center;line-height:18px">2 od 35</div>
<div class="nb on" style="left:324px;top:414px"><svg width="15" height="17" viewBox="0 0 15 17" style="display:block"><path d="M5.5 5v7l4-3.5z" fill="#222"/></svg></div>
<div class="nb on" style="left:341px;top:414px"><svg width="15" height="17" viewBox="0 0 15 17" style="display:block"><path d="M3.5 5v7l4-3.5zM8 5v7l4-3.5z" fill="#222"/></svg></div>
<div class="nb on" style="left:358px;top:414px"><svg width="15" height="17" viewBox="0 0 15 17" style="display:block"><path d="M3 5v7l3.6-3.5zM6.6 5v7l3.6-3.5zM10.4 5H12v7h-1.6z" fill="#222"/></svg></div>
<div class="nb" style="left:375px;top:414px"><svg width="15" height="17" viewBox="0 0 15 17" style="display:block"><path d="M6.5 4.5h2v3h3v2h-3v3h-2v-3h-3v-2h3z" fill="#b8b8b8"/></svg></div>
<div class="nb" style="left:392px;top:414px"><svg width="15" height="17" viewBox="0 0 15 17" style="display:block"><path d="M3.5 7.5h8v1.6h-8z" fill="#b4b4b4"/></svg></div>
<div class="nb" style="left:409px;top:414px"><svg width="15" height="17" viewBox="0 0 15 17" style="display:block"><path d="M7.5 6l4 4h-8z" fill="#b4b4b4"/></svg></div>
<div class="nb" style="left:426px;top:414px"><svg width="15" height="17" viewBox="0 0 15 17" style="display:block"><path d="M3.5 8.5l2.7 2.7 5-5.4" stroke="#b4b4b4" stroke-width="1.8" fill="none"/></svg></div>
<div class="nb" style="left:443px;top:414px"><svg width="15" height="17" viewBox="0 0 15 17" style="display:block"><path d="M3.7 4.7l7.6 7.6M11.3 4.7l-7.6 7.6" stroke="#a8a8a8" stroke-width="1.5" fill="none"/></svg></div>
<div class="nb on" style="left:460px;top:414px"><svg width="15" height="17" viewBox="0 0 15 17" style="display:block"><path d="M3.5 10.5c0-3 2-4.5 4.3-4.5 1.6 0 2.7 0.8 3.3 2" stroke="#222" stroke-width="1.7" fill="none"/><path d="M12.6 6.2v5h-5z" fill="#222"/></svg></div>
<div class="nb on" style="left:477px;top:414px"><svg width="15" height="17" viewBox="0 0 15 17" style="display:block"><path d="M7.5 3.5v10M2.8 8.5h9.4M4.2 5.2l6.6 6.6M10.8 5.2l-6.6 6.6" stroke="#111" stroke-width="1.3" fill="none"/></svg></div>
<div class="nb" style="left:494px;top:414px"><svg width="15" height="17" viewBox="0 0 15 17" style="display:block"><path d="M8.5 5v9M4.3 9.5h8.4M5.5 6.5l6 6M11.5 6.5l-6 6" stroke="#999" stroke-width="1.2" fill="none"/><path d="M2 3.5l3 2-3 2z" fill="#777"/></svg></div>
<div class="nb on" style="left:511px;top:414px"><svg width="15" height="17" viewBox="0 0 15 17" style="display:block"><path d="M3.8 5h7.4v2l-2.6 2v3h-2.2V9L3.8 7z" fill="#f59a23"/><path d="M3.8 5h7.4v1.3H3.8z" fill="#e06c00"/></svg></div>
<svg class="a" style="left:583px;top:418px" width="7" height="9"><path d="M5.5 0.8l-4 3.7 4 3.7" stroke="#bdbdbd" stroke-width="1.5" fill="none"/></svg>
<svg class="a" style="left:1217px;top:418px" width="7" height="9"><path d="M1.5 0.8l4 3.7-4 3.7" stroke="#bdbdbd" stroke-width="1.5" fill="none"/></svg>
<div class="a" style="left:215px;top:460px;width:1031px;height:1px;background:#a6a6a6"></div>
<svg class="a" style="left:215px;top:435px" width="99" height="25" viewBox="0 0 99 25"><defs><linearGradient id="tg5" x1="0" y1="0" x2="0" y2="1"><stop offset="0" stop-color="#fbfbfb"/><stop offset="0.55" stop-color="#f0f0f0"/><stop offset="1" stop-color="#e2e2e2"/></linearGradient></defs><path d="M0.5 25V6.5L6.5 0.5H98.5V25z" fill="url(#tg5)" stroke="#9a9a9a"/><path d="M1.5 25V7L7 1.5H97.5V25" fill="none" stroke="#fff"/></svg>
<div class="a" style="left:215px;top:437px;width:99px;height:23px;text-align:center;font-size:12px;letter-spacing:-0.1px;line-height:26px">Podaci o radniku</div>
<svg class="a" style="left:316px;top:435px" width="121" height="25" viewBox="0 0 121 25"><defs><linearGradient id="tg6" x1="0" y1="0" x2="0" y2="1"><stop offset="0" stop-color="#fbfbfb"/><stop offset="0.55" stop-color="#f0f0f0"/><stop offset="1" stop-color="#e2e2e2"/></linearGradient></defs><path d="M0.5 25V6.5L6.5 0.5H120.5V25z" fill="url(#tg6)" stroke="#9a9a9a"/><path d="M1.5 25V7L7 1.5H119.5V25" fill="none" stroke="#fff"/></svg>
<div class="a" style="left:316px;top:437px;width:121px;height:23px;text-align:center;font-size:12px;letter-spacing:-0.1px;line-height:26px">Kadrovska evidencija</div>
<svg class="a" style="left:439px;top:435px" width="143" height="25" viewBox="0 0 143 25"><defs><linearGradient id="tg7" x1="0" y1="0" x2="0" y2="1"><stop offset="0" stop-color="#fbfbfb"/><stop offset="0.55" stop-color="#f0f0f0"/><stop offset="1" stop-color="#e2e2e2"/></linearGradient></defs><path d="M0.5 25V6.5L6.5 0.5H142.5V25z" fill="url(#tg7)" stroke="#9a9a9a"/><path d="M1.5 25V7L7 1.5H141.5V25" fill="none" stroke="#fff"/></svg>
<div class="a" style="left:439px;top:437px;width:143px;height:23px;text-align:center;font-size:12px;letter-spacing:-0.1px;line-height:26px">Pregled obračuna zarada</div>
<svg class="a" style="left:583px;top:435px" width="138" height="26" viewBox="0 0 138 26"><path d="M0.5 26V6.5L6.5 0.5H137.5V26z" fill="#f0f0f0" stroke="#9a9a9a"/><path d="M6.2 1H137V4H3.2z" fill="#2b579a"/></svg>
<div class="a" style="left:583px;top:437px;width:138px;height:23px;text-align:center;font-size:12px;letter-spacing:-0.1px;line-height:26px">Ugovoreni iznosi zarade</div>
<svg class="a" style="left:723px;top:435px" width="105" height="25" viewBox="0 0 105 25"><defs><linearGradient id="tg9" x1="0" y1="0" x2="0" y2="1"><stop offset="0" stop-color="#fbfbfb"/><stop offset="0.55" stop-color="#f0f0f0"/><stop offset="1" stop-color="#e2e2e2"/></linearGradient></defs><path d="M0.5 25V6.5L6.5 0.5H104.5V25z" fill="url(#tg9)" stroke="#9a9a9a"/><path d="M1.5 25V7L7 1.5H103.5V25" fill="none" stroke="#fff"/></svg>
<div class="a" style="left:723px;top:437px;width:105px;height:23px;text-align:center;font-size:12px;letter-spacing:-0.1px;line-height:26px">Obustave na rate</div>
<svg class="a" style="left:830px;top:435px" width="131" height="25" viewBox="0 0 131 25"><defs><linearGradient id="tg10" x1="0" y1="0" x2="0" y2="1"><stop offset="0" stop-color="#fbfbfb"/><stop offset="0.55" stop-color="#f0f0f0"/><stop offset="1" stop-color="#e2e2e2"/></linearGradient></defs><path d="M0.5 25V6.5L6.5 0.5H130.5V25z" fill="url(#tg10)" stroke="#9a9a9a"/><path d="M1.5 25V7L7 1.5H129.5V25" fill="none" stroke="#fff"/></svg>
<div class="a" style="left:830px;top:437px;width:131px;height:23px;text-align:center;font-size:12px;letter-spacing:-0.1px;line-height:26px">Obustave na procenat</div>
<svg class="a" style="left:963px;top:435px" width="185" height="25" viewBox="0 0 185 25"><defs><linearGradient id="tg11" x1="0" y1="0" x2="0" y2="1"><stop offset="0" stop-color="#fbfbfb"/><stop offset="0.55" stop-color="#f0f0f0"/><stop offset="1" stop-color="#e2e2e2"/></linearGradient></defs><path d="M0.5 25V6.5L6.5 0.5H184.5V25z" fill="url(#tg11)" stroke="#9a9a9a"/><path d="M1.5 25V7L7 1.5H183.5V25" fill="none" stroke="#fff"/></svg>
<div class="a" style="left:963px;top:437px;width:185px;height:23px;text-align:center;font-size:12px;letter-spacing:-0.1px;line-height:26px">Dobrovoljno dodatno osiguranje</div>
<svg class="a" style="left:1148px;top:435px" width="92" height="25" viewBox="0 0 92 25"><defs><linearGradient id="tg12" x1="0" y1="0" x2="0" y2="1"><stop offset="0" stop-color="#fbfbfb"/><stop offset="0.55" stop-color="#f0f0f0"/><stop offset="1" stop-color="#e2e2e2"/></linearGradient></defs><path d="M0.5 25V6.5L6.5 0.5H91.5V25z" fill="url(#tg12)" stroke="#9a9a9a"/><path d="M1.5 25V7L7 1.5H90.5V25" fill="none" stroke="#fff"/></svg>
<div class="a" style="left:1148px;top:437px;width:92px;height:23px;text-align:center;font-size:12px;letter-spacing:-0.1px;line-height:26px"><span style="display:block;text-align:left;padding-left:7px">Vezni d</span></div>
<div class="a" style="left:1196px;top:434px;width:50px;height:26px;background:#f0f0f0"></div>
<div class="a" style="left:1196px;top:436px;width:15px;height:17px;background:#f0f0f0;border:1px solid #a4a4a4;box-shadow:inset 1px 1px 0 #fafafa"></div>
<svg class="a" style="left:1198px;top:439px" width="11" height="11"><path d="M1.5 1.5l8 8M9.5 1.5l-8 8" stroke="#000" stroke-width="2.2"/></svg>
<div class="a" style="left:1211px;top:436px;width:17px;height:17px;background:#f0f0f0;border:1px solid #a4a4a4;box-shadow:inset 1px 1px 0 #fafafa"></div>
<svg class="a" style="left:1217px;top:440px" width="6" height="9"><path d="M5.5 0v9L0.5 4.5z" fill="#b4b4b4"/></svg>
<div class="a" style="left:1229px;top:436px;width:17px;height:17px;background:#f0f0f0;border:1px solid #a4a4a4;box-shadow:inset 1px 1px 0 #fafafa"></div>
<svg class="a" style="left:1235px;top:440px" width="6" height="9"><path d="M0.5 0v9l5-4.5z" fill="#000"/></svg>
<div class="a" style="left:1196px;top:460px;width:50px;height:1px;background:#a6a6a6"></div>
<div class="a" style="left:215px;top:461px;width:1031px;height:160px;border:1px solid #0c2e9e;background:#f0f0f0;box-shadow:0 1px 0 #fbfbf8"></div>
<div class="a" style="left:216px;top:462px;width:1029px;height:140px;background:#fff"></div>
<div class="hd" style="left:216px;top:462px;width:60px;">Šifra Zap.</div>
<div class="hsep" style="left:276px;top:464px;height:16px"></div>
<div class="hd" style="left:277px;top:462px;width:199px;">Prezime i ime</div>
<div class="hsep" style="left:476px;top:464px;height:16px"></div>
<div class="hd" style="left:477px;top:462px;width:99px;">Od Datuma</div>
<div class="hsep" style="left:576px;top:464px;height:16px"></div>
<div class="hd" style="left:577px;top:462px;width:84px;">Mes./Po času</div>
<div class="hsep" style="left:661px;top:464px;height:16px"></div>
<div class="hd" style="left:662px;top:462px;width:68px;">Bruto/Neto</div>
<div class="hsep" style="left:730px;top:464px;height:16px"></div>
<div class="hd" style="left:731px;top:462px;width:118px;">Iznos</div>
<div class="hsep" style="left:849px;top:464px;height:16px"></div>
<div class="hd" style="left:850px;top:462px;width:31px;">Šif...</div>
<div class="hsep" style="left:881px;top:464px;height:16px"></div>
<div class="hd" style="left:882px;top:462px;width:30px;">O...</div>
<div class="hsep" style="left:912px;top:464px;height:16px"></div>
<div class="hd" style="left:913px;top:462px;width:80px;">Tip kursa</div>
<div class="hsep" style="left:993px;top:464px;height:16px"></div>
<div class="a" style="left:216px;top:481px;width:778px;height:1px;background:#9db7e0"></div>
<div class="cell" style="left:216px;top:482px;width:61px;padding-left:3px;background:#dde6f3;">00002</div>
<div class="cell" style="left:277px;top:482px;width:200px;padding-left:2px;background:#dde6f3;">SIMIĆ SLAVIŠA</div>
<div class="cell" style="left:477px;top:482px;width:100px;padding-left:1px;background:#dde6f3;">01.03.12</div>
<div class="cell c" style="left:577px;top:482px;width:85px;padding-left:0px;background:#dde6f3;">M</div>
<div class="cell c" style="left:662px;top:482px;width:69px;padding-left:0px;background:#dde6f3;">B</div>
<div class="cell r" style="left:731px;top:482px;width:119px;padding-right:3px;background:#dde6f3;">39.200,00000</div>
<div class="cell r" style="left:850px;top:482px;width:32px;padding-right:3px;background:#dde6f3;">941</div>
<div class="cell" style="left:882px;top:482px;width:31px;padding-left:3px;background:#dde6f3;">RSD</div>
<div class="cell" style="left:913px;top:482px;width:81px;padding-left:2px;background:#dde6f3;">NBS Srednji</div>
<div class="a" style="left:216px;top:602px;width:1029px;height:18px;background:#f0f0f0"></div>
<div class="nb" style="left:217px;top:603px"><svg width="15" height="17" viewBox="0 0 15 17" style="display:block"><path d="M3 5h1.6v7H3zM8.4 5v7L4.8 8.5zM12 5v7L8.4 8.5z" fill="#b4b4b4"/></svg></div>
<div class="nb" style="left:234px;top:603px"><svg width="15" height="17" viewBox="0 0 15 17" style="display:block"><path d="M7.5 5v7L3.5 8.5zM12 5v7L8 8.5z" fill="#b4b4b4"/></svg></div>
<div class="nb" style="left:251px;top:603px"><svg width="15" height="17" viewBox="0 0 15 17" style="display:block"><path d="M9.5 5v7L5.5 8.5z" fill="#b4b4b4"/></svg></div>
<div class="a t13" style="left:268px;top:603px;width:50px;height:17px;text-align:center;line-height:18px">1 od 1</div>
<div class="nb" style="left:318px;top:603px"><svg width="15" height="17" viewBox="0 0 15 17" style="display:block"><path d="M5.5 5v7l4-3.5z" fill="#b4b4b4"/></svg></div>
<div class="nb" style="left:335px;top:603px"><svg width="15" height="17" viewBox="0 0 15 17" style="display:block"><path d="M3.5 5v7l4-3.5zM8 5v7l4-3.5z" fill="#b4b4b4"/></svg></div>
<div class="nb" style="left:352px;top:603px"><svg width="15" height="17" viewBox="0 0 15 17" style="display:block"><path d="M3 5v7l3.6-3.5zM6.6 5v7l3.6-3.5zM10.4 5H12v7h-1.6z" fill="#b4b4b4"/></svg></div>
<div class="nb" style="left:369px;top:603px"><svg width="15" height="17" viewBox="0 0 15 17" style="display:block"><path d="M6.5 4.5h2v3h3v2h-3v3h-2v-3h-3v-2h3z" fill="#b8b8b8"/></svg></div>
<div class="nb" style="left:386px;top:603px"><svg width="15" height="17" viewBox="0 0 15 17" style="display:block"><path d="M3.5 7.5h8v1.6h-8z" fill="#b4b4b4"/></svg></div>
<div class="nb" style="left:403px;top:603px"><svg width="15" height="17" viewBox="0 0 15 17" style="display:block"><path d="M7.5 6l4 4h-8z" fill="#b4b4b4"/></svg></div>
<div class="nb" style="left:420px;top:603px"><svg width="15" height="17" viewBox="0 0 15 17" style="display:block"><path d="M3.5 8.5l2.7 2.7 5-5.4" stroke="#b4b4b4" stroke-width="1.8" fill="none"/></svg></div>
<div class="nb" style="left:437px;top:603px"><svg width="15" height="17" viewBox="0 0 15 17" style="display:block"><path d="M3.7 4.7l7.6 7.6M11.3 4.7l-7.6 7.6" stroke="#a8a8a8" stroke-width="1.5" fill="none"/></svg></div>
<div class="nb on" style="left:454px;top:603px"><svg width="15" height="17" viewBox="0 0 15 17" style="display:block"><path d="M3.5 10.5c0-3 2-4.5 4.3-4.5 1.6 0 2.7 0.8 3.3 2" stroke="#222" stroke-width="1.7" fill="none"/><path d="M12.6 6.2v5h-5z" fill="#222"/></svg></div>
<div class="nb on" style="left:471px;top:603px"><svg width="15" height="17" viewBox="0 0 15 17" style="display:block"><path d="M7.5 3.5v10M2.8 8.5h9.4M4.2 5.2l6.6 6.6M10.8 5.2l-6.6 6.6" stroke="#111" stroke-width="1.3" fill="none"/></svg></div>
<div class="nb" style="left:488px;top:603px"><svg width="15" height="17" viewBox="0 0 15 17" style="display:block"><path d="M8.5 5v9M4.3 9.5h8.4M5.5 6.5l6 6M11.5 6.5l-6 6" stroke="#999" stroke-width="1.2" fill="none"/><path d="M2 3.5l3 2-3 2z" fill="#777"/></svg></div>
<div class="nb on" style="left:505px;top:603px"><svg width="15" height="17" viewBox="0 0 15 17" style="display:block"><path d="M3.8 5h7.4v2l-2.6 2v3h-2.2V9L3.8 7z" fill="#f59a23"/><path d="M3.8 5h7.4v1.3H3.8z" fill="#e06c00"/></svg></div>
<svg class="a" style="left:583px;top:606px" width="7" height="9"><path d="M5.5 0.8l-4 3.7 4 3.7" stroke="#bdbdbd" stroke-width="1.5" fill="none"/></svg>
<svg class="a" style="left:1231px;top:606px" width="7" height="9"><path d="M1.5 0.8l4 3.7-4 3.7" stroke="#bdbdbd" stroke-width="1.5" fill="none"/></svg>
<div class="a" style="left:215px;top:642px;width:1031px;height:1px;background:#a6a6a6"></div>
<svg class="a" style="left:215px;top:623px" width="120" height="19" viewBox="0 0 120 19"><defs><linearGradient id="tg13" x1="0" y1="0" x2="0" y2="1"><stop offset="0" stop-color="#fbfbfb"/><stop offset="0.55" stop-color="#f0f0f0"/><stop offset="1" stop-color="#e2e2e2"/></linearGradient></defs><path d="M0.5 19V6.5L6.5 0.5H119.5V19z" fill="url(#tg13)" stroke="#9a9a9a"/><path d="M1.5 19V7L7 1.5H118.5V19" fill="none" stroke="#fff"/></svg>
<div class="a" style="left:215px;top:625px;width:120px;height:17px;text-align:center;font-size:12px;letter-spacing:-0.1px;line-height:21px"><span style="letter-spacing:-0.2px">Ostala lična primanja</span></div>
<svg class="a" style="left:336px;top:623px" width="145" height="20" viewBox="0 0 145 20"><path d="M0.5 20V6.5L6.5 0.5H144.5V20z" fill="#f0f0f0" stroke="#9a9a9a"/><path d="M6.2 1H144V4H3.2z" fill="#2b579a"/></svg>
<div class="a" style="left:336px;top:625px;width:145px;height:17px;text-align:center;font-size:12px;letter-spacing:-0.1px;line-height:21px">Specifikacija po računima</div>
<div class="a" style="left:215px;top:643px;width:1031px;height:101px;border:1px solid #0c2e9e;background:#f0f0f0;box-shadow:0 1px 0 #fbfbf8"></div>
<div class="a" style="left:216px;top:644px;width:1029px;height:80px;background:#fff"></div>
<div class="hd" style="left:216px;top:644px;width:123px;">Tekući račun</div>
<div class="hsep" style="left:339px;top:646px;height:16px"></div>
<div class="hd" style="left:340px;top:644px;width:95px;">Vrsta raspodele</div>
<div class="hsep" style="left:435px;top:646px;height:16px"></div>
<div class="hd" style="left:436px;top:644px;width:102px;">Iznos / Procenat</div>
<div class="hsep" style="left:538px;top:646px;height:16px"></div>
<div class="a" style="left:216px;top:663px;width:323px;height:1px;background:#9db7e0"></div>
<div class="cell" style="left:216px;top:664px;width:124px;padding-left:3px;">150-12643-39</div>
<div class="cell" style="left:340px;top:664px;width:96px;padding-left:1px;background:#e0e0e0;">Fiksni iznos</div>
<div class="cell r" style="left:436px;top:664px;width:103px;padding-right:3px;background:#e0e0e0;">90.000,00</div>
<div class="cell" style="left:216px;top:682px;width:124px;padding-left:3px;">160-25448445-66</div>
<div class="cell" style="left:340px;top:682px;width:96px;padding-left:1px;">Fiksni iznos</div>
<div class="cell r" style="left:436px;top:682px;width:103px;padding-right:3px;">1.000,00</div>
<div class="cell" style="left:216px;top:700px;width:124px;padding-left:3px;">330-656555555-66</div>
<div class="cell" style="left:340px;top:700px;width:96px;padding-left:1px;">% Iznosa</div>
<div class="cell r" style="left:436px;top:700px;width:103px;padding-right:3px;">30,00 %</div>
<div class="a" style="left:216px;top:724px;width:1029px;height:19px;background:#f0f0f0"></div>
<div class="nb" style="left:217px;top:725px"><svg width="15" height="17" viewBox="0 0 15 17" style="display:block"><path d="M3 5h1.6v7H3zM8.4 5v7L4.8 8.5zM12 5v7L8.4 8.5z" fill="#b4b4b4"/></svg></div>
<div class="nb" style="left:234px;top:725px"><svg width="15" height="17" viewBox="0 0 15 17" style="display:block"><path d="M7.5 5v7L3.5 8.5zM12 5v7L8 8.5z" fill="#b4b4b4"/></svg></div>
<div class="nb" style="left:251px;top:725px"><svg width="15" height="17" viewBox="0 0 15 17" style="display:block"><path d="M9.5 5v7L5.5 8.5z" fill="#b4b4b4"/></svg></div>
<div class="a t13" style="left:268px;top:725px;width:50px;height:17px;text-align:center;line-height:18px">1 od 3</div>
<div class="nb on" style="left:318px;top:725px"><svg width="15" height="17" viewBox="0 0 15 17" style="display:block"><path d="M5.5 5v7l4-3.5z" fill="#222"/></svg></div>
<div class="nb on" style="left:335px;top:725px"><svg width="15" height="17" viewBox="0 0 15 17" style="display:block"><path d="M3.5 5v7l4-3.5zM8 5v7l4-3.5z" fill="#222"/></svg></div>
<div class="nb on" style="left:352px;top:725px"><svg width="15" height="17" viewBox="0 0 15 17" style="display:block"><path d="M3 5v7l3.6-3.5zM6.6 5v7l3.6-3.5zM10.4 5H12v7h-1.6z" fill="#222"/></svg></div>
<div class="nb on" style="left:369px;top:725px"><svg width="15" height="17" viewBox="0 0 15 17" style="display:block"><path d="M6.5 4.5h2v3h3v2h-3v3h-2v-3h-3v-2h3z" fill="#2a9a1a"/></svg></div>
<div class="nb" style="left:386px;top:725px"><svg width="15" height="17" viewBox="0 0 15 17" style="display:block"><path d="M3.5 7.5h8v1.6h-8z" fill="#b4b4b4"/></svg></div>
<div class="nb" style="left:403px;top:725px"><svg width="15" height="17" viewBox="0 0 15 17" style="display:block"><path d="M7.5 6l4 4h-8z" fill="#b4b4b4"/></svg></div>
<div class="nb" style="left:420px;top:725px"><svg width="15" height="17" viewBox="0 0 15 17" style="display:block"><path d="M3.5 8.5l2.7 2.7 5-5.4" stroke="#b4b4b4" stroke-width="1.8" fill="none"/></svg></div>
<div class="nb" style="left:437px;top:725px"><svg width="15" height="17" viewBox="0 0 15 17" style="display:block"><path d="M3.7 4.7l7.6 7.6M11.3 4.7l-7.6 7.6" stroke="#a8a8a8" stroke-width="1.5" fill="none"/></svg></div>
<div class="nb on" style="left:454px;top:725px"><svg width="15" height="17" viewBox="0 0 15 17" style="display:block"><path d="M3.5 10.5c0-3 2-4.5 4.3-4.5 1.6 0 2.7 0.8 3.3 2" stroke="#222" stroke-width="1.7" fill="none"/><path d="M12.6 6.2v5h-5z" fill="#222"/></svg></div>
<div class="nb on" style="left:471px;top:725px"><svg width="15" height="17" viewBox="0 0 15 17" style="display:block"><path d="M7.5 3.5v10M2.8 8.5h9.4M4.2 5.2l6.6 6.6M10.8 5.2l-6.6 6.6" stroke="#111" stroke-width="1.3" fill="none"/></svg></div>
<div class="nb" style="left:488px;top:725px"><svg width="15" height="17" viewBox="0 0 15 17" style="display:block"><path d="M8.5 5v9M4.3 9.5h8.4M5.5 6.5l6 6M11.5 6.5l-6 6" stroke="#999" stroke-width="1.2" fill="none"/><path d="M2 3.5l3 2-3 2z" fill="#777"/></svg></div>
<div class="nb on" style="left:505px;top:725px"><svg width="15" height="17" viewBox="0 0 15 17" style="display:block"><path d="M3.8 5h7.4v2l-2.6 2v3h-2.2V9L3.8 7z" fill="#f59a23"/><path d="M3.8 5h7.4v1.3H3.8z" fill="#e06c00"/></svg></div>
<svg class="a" style="left:583px;top:729px" width="7" height="9"><path d="M5.5 0.8l-4 3.7 4 3.7" stroke="#bdbdbd" stroke-width="1.5" fill="none"/></svg>
<svg class="a" style="left:1231px;top:729px" width="7" height="9"><path d="M1.5 0.8l4 3.7-4 3.7" stroke="#bdbdbd" stroke-width="1.5" fill="none"/></svg>
<div class="a" style="left:211px;top:614px;width:370px;height:131px;border:5px solid #e8212b;border-radius:19px;background:transparent"></div>
<div class="a" style="left:216px;top:746px;width:515px;height:16px;border:1px solid #d4d4d4;border-top-color:#fff;background:#f0f0f0"></div>
<div class="a" style="left:219px;top:746px;font-size:13px;letter-spacing:-0.231px;line-height:17px">Zaposleni: SIMIĆ SLAVIŠA</div>
<div class="a" style="left:732px;top:746px;width:514px;height:16px;border:1px solid #d4d4d4;background:#f0f0f0"></div>
<div class="a" style="left:735px;top:746px;font-size:11px;letter-spacing:-0.185px;line-height:17px">Početni datum perioda primene</div>
<div class="a" style="left:214px;top:794px;width:1032px;height:1px;background:#ababab"></div>
<div class="a" style="left:214px;top:795px;width:1032px;height:1px;background:#fafafa"></div>
<div class="pnl" style="left:216px;top:765px;width:102px;height:29px;"></div>
<div class="chk" style="left:220px;top:774px;width:11px;height:11px;"></div>
<div class="a" style="left:237px;top:771px;font-size:11px;letter-spacing:-0.516px;line-height:16px">F2 - IZMENE</div>
<div class="pnl" style="left:320px;top:765px;width:675px;height:29px;"></div>
<div class="a" style="left:623px;top:771px;font-size:11px;letter-spacing:-0.204px;line-height:16px">F5 - Novi slog</div>
<div class="pnl" style="left:996px;top:765px;width:82px;height:29px;"></div>
<div class="btn" style="left:998px;top:767px;width:78px;height:24px;line-height:22px">Registar</div>
<div class="pnl" style="left:1080px;top:765px;width:82px;height:29px;"></div>
<div class="btn" style="left:1082px;top:767px;width:78px;height:24px;line-height:22px">Odustani</div>
<div class="pnl" style="left:1164px;top:765px;width:82px;height:29px;"></div>
<div class="btn" style="left:1166px;top:767px;width:78px;height:24px;line-height:22px">OK / Upiši</div>
<div class="pnl" style="left:214px;top:797px;width:92px;height:28px;"></div>
<div class="chk" style="left:218px;top:805px;width:11px;height:11px;"></div>
<div class="a" style="left:234px;top:803px;font-size:11px;letter-spacing:-0.47px;line-height:16px">F2 - IZMENE</div>
<div class="pnl" style="left:308px;top:797px;width:22px;height:28px;"></div>
<div class="a" style="left:312px;top:804px;width:7px;height:13px;background:repeating-linear-gradient(#333 0 1px,transparent 1px 2px)"></div>
<div class="a" style="left:320px;top:804px;width:7px;height:13px;background:repeating-linear-gradient(#333 0 1px,transparent 1px 2px)"></div>
<div class="pnl" style="left:332px;top:797px;width:121px;height:28px;"></div>
<div class="chk" style="left:336px;top:805px;width:11px;height:11px;"></div>
<div class="a" style="left:353px;top:802px;font-size:12px;letter-spacing:-0.231px;line-height:17px">F3 - PRIKAŽI SVE</div>
<div class="pnl" style="left:456px;top:797px;width:301px;height:28px;"></div>
<div class="a" style="left:478px;top:803px;font-size:11px;letter-spacing:-0.226px;line-height:16px">PRETRAGA ( Ctrl+f ), F1 - PO ŠIFRI, F7 - PO NAZIVU</div>
<div class="pnl" style="left:759px;top:797px;width:337px;height:28px;"></div>
<div class="a" style="left:762px;top:803px;font-size:11px;letter-spacing:-0.458px;line-height:16px">SIMIĆ SLAVIŠA</div>
<div class="a" style="left:851px;top:803px;font-size:11px;letter-spacing:-0.315px;line-height:16px">Prezime zaposlenog</div>
<div class="pnl" style="left:1098px;top:797px;width:86px;height:28px;"></div>
<div class="btn" style="left:1100px;top:799px;width:82px;height:23px;line-height:21px;text-align:left;padding-left:9px">Funkcije</div>
<svg class="a" style="left:1169px;top:808px" width="8" height="4"><path d="M0 0h8l-4 4z" fill="#000"/></svg>
<div class="pnl" style="left:1186px;top:797px;width:60px;height:28px;"></div>
<div class="btn" style="left:1188px;top:799px;width:57px;height:23px;line-height:21px">OK/Upiši</div>
<div class="a" style="left:1246px;top:92px;width:2px;height:734px;background:#f0f0f0"></div>
<div class="a" style="left:1247px;top:92px;width:1px;height:734px;background:#b8b4ac"></div>
<div class="a" style="left:1248px;top:92px;width:1px;height:734px;background:#2b579a"></div>
<div class="a" style="left:1249px;top:92px;width:1px;height:734px;background:#c9d3e6"></div>
<div class="a" style="left:1250px;top:91px;width:208px;height:1px;background:#dcdcdc"></div>
<div class="a" style="left:1250px;top:117px;width:208px;height:1px;background:#a6a6a6"></div>
<svg class="a" style="left:1250px;top:92px" width="46" height="26" viewBox="0 0 46 26"><path d="M0.5 26V6.5L6.5 0.5H45.5V26z" fill="#f0f0f0" stroke="#9a9a9a"/><path d="M6.2 1H45V4H3.2z" fill="#2b579a"/></svg>
<div class="a" style="left:1250px;top:94px;width:46px;height:23px;text-align:center;font-size:12px;letter-spacing:-0.1px;line-height:26px">Planer</div>
<svg class="a" style="left:1297px;top:92px" width="71" height="25" viewBox="0 0 71 25"><defs><linearGradient id="tg16" x1="0" y1="0" x2="0" y2="1"><stop offset="0" stop-color="#fbfbfb"/><stop offset="0.55" stop-color="#f0f0f0"/><stop offset="1" stop-color="#e2e2e2"/></linearGradient></defs><path d="M0.5 25V6.5L6.5 0.5H70.5V25z" fill="url(#tg16)" stroke="#9a9a9a"/><path d="M1.5 25V7L7 1.5H69.5V25" fill="none" stroke="#fff"/></svg>
<div class="a" style="left:1297px;top:94px;width:71px;height:23px;text-align:center;font-size:12px;letter-spacing:-0.1px;line-height:26px">Za štampu</div>
<svg class="a" style="left:1369px;top:92px" width="56" height="25" viewBox="0 0 56 25"><defs><linearGradient id="tg17" x1="0" y1="0" x2="0" y2="1"><stop offset="0" stop-color="#fbfbfb"/><stop offset="0.55" stop-color="#f0f0f0"/><stop offset="1" stop-color="#e2e2e2"/></linearGradient></defs><path d="M0.5 25V6.5L6.5 0.5H55.5V25z" fill="url(#tg17)" stroke="#9a9a9a"/><path d="M1.5 25V7L7 1.5H54.5V25" fill="none" stroke="#fff"/></svg>
<div class="a" style="left:1369px;top:94px;width:56px;height:23px;text-align:center;font-size:12px;letter-spacing:-0.1px;line-height:26px">Tajmeri</div>
<div class="a" style="left:1250px;top:118px;width:208px;height:708px;background:#f0f0f0"></div>
<div class="a" style="left:1293px;top:118px;width:1px;height:708px;background:#c4c4c4"></div>
<div class="a" style="left:1250px;top:143px;width:44px;height:1px;background:#b4b4b4"></div>
<div class="a" style="left:1294px;top:118px;width:147px;height:24px;background:linear-gradient(#fbfbfb,#f3f3f3);border-left:1px solid #e0e0e0"></div>
<div class="a t12" style="left:1294px;top:123px;width:147px;text-align:center;line-height:17px">sreda, 22. jun</div>
<div class="a" style="left:1294px;top:142px;width:147px;height:2px;background:#c6c6c6"></div>
<div class="a" style="left:1294px;top:144px;width:147px;height:682px;background:#fff"></div>
<div class="a" style="left:1300px;top:144px;width:1px;height:682px;background:#000"></div>
<div class="a" style="left:1441px;top:118px;width:17px;height:708px;background:#f0f0f0"></div>
<div class="a" style="left:1442px;top:247px;width:16px;height:435px;background:#cdcdcd"></div>
<svg class="a" style="left:1444px;top:125px" width="10" height="7"><path d="M1.5 5.5l3.5-3.7 3.5 3.7" stroke="#4a4a4a" stroke-width="2" fill="none"/></svg>
<svg class="a" style="left:1444px;top:815px" width="10" height="7"><path d="M1.5 1.5l3.5 3.7 3.5-3.7" stroke="#4a4a4a" stroke-width="2" fill="none"/></svg>
<div class="a" style="left:1301px;top:165px;width:140px;height:1px;background:#b0b0b0"></div>
<div class="a" style="left:1301px;top:187px;width:140px;height:1px;background:#b0b0b0"></div>
<div class="a" style="left:1257px;top:147px;font-size:17px;line-height:20px;transform:scaleX(0.87);transform-origin:0 0">04</div>
<div class="a" style="left:1278px;top:151px;font-size:8px;line-height:9px;letter-spacing:-0.3px">00</div>
<div class="a" style="left:1276px;top:165px;width:12px;height:1px;background:#a8a8a8"></div>
<div class="a" style="left:1254px;top:187px;width:34px;height:1px;background:#a8a8a8"></div>
<div class="a" style="left:1301px;top:209px;width:140px;height:1px;background:#b0b0b0"></div>
<div class="a" style="left:1301px;top:231px;width:140px;height:1px;background:#b0b0b0"></div>
<div class="a" style="left:1257px;top:191px;font-size:17px;line-height:20px;transform:scaleX(0.87);transform-origin:0 0">05</div>
<div class="a" style="left:1278px;top:195px;font-size:8px;line-height:9px;letter-spacing:-0.3px">00</div>
<div class="a" style="left:1276px;top:209px;width:12px;height:1px;background:#a8a8a8"></div>
<div class="a" style="left:1254px;top:231px;width:34px;height:1px;background:#a8a8a8"></div>
<div class="a" style="left:1301px;top:253px;width:140px;height:1px;background:#b0b0b0"></div>
<div class="a" style="left:1301px;top:275px;width:140px;height:1px;background:#b0b0b0"></div>
<div class="a" style="left:1257px;top:235px;font-size:17px;line-height:20px;transform:scaleX(0.87);transform-origin:0 0">06</div>
<div class="a" style="left:1278px;top:239px;font-size:8px;line-height:9px;letter-spacing:-0.3px">00</div>
<div class="a" style="left:1276px;top:253px;width:12px;height:1px;background:#a8a8a8"></div>
<div class="a" style="left:1254px;top:275px;width:34px;height:1px;background:#a8a8a8"></div>
<div class="a" style="left:1301px;top:297px;width:140px;height:1px;background:#b0b0b0"></div>
<div class="a" style="left:1301px;top:319px;width:140px;height:1px;background:#b0b0b0"></div>
<div class="a" style="left:1257px;top:279px;font-size:17px;line-height:20px;transform:scaleX(0.87);transform-origin:0 0">07</div>
<div class="a" style="left:1278px;top:283px;font-size:8px;line-height:9px;letter-spacing:-0.3px">00</div>
<div class="a" style="left:1276px;top:297px;width:12px;height:1px;background:#a8a8a8"></div>
<div class="a" style="left:1254px;top:319px;width:34px;height:1px;background:#a8a8a8"></div>
<div class="a" style="left:1301px;top:341px;width:140px;height:1px;background:#b0b0b0"></div>
<div class="a" style="left:1301px;top:363px;width:140px;height:1px;background:#b0b0b0"></div>
<div class="a" style="left:1257px;top:323px;font-size:17px;line-height:20px;transform:scaleX(0.87);transform-origin:0 0">08</div>
<div class="a" style="left:1278px;top:327px;font-size:8px;line-height:9px;letter-spacing:-0.3px">00</div>
<div class="a" style="left:1276px;top:341px;width:12px;height:1px;background:#a8a8a8"></div>
<div class="a" style="left:1254px;top:363px;width:34px;height:1px;background:#a8a8a8"></div>
<div class="a" style="left:1301px;top:385px;width:140px;height:1px;background:#b0b0b0"></div>
<div class="a" style="left:1301px;top:407px;width:140px;height:1px;background:#b0b0b0"></div>
<div class="a" style="left:1257px;top:367px;font-size:17px;line-height:20px;transform:scaleX(0.87);transform-origin:0 0">09</div>
<div class="a" style="left:1278px;top:371px;font-size:8px;line-height:9px;letter-spacing:-0.3px">00</div>
<div class="a" style="left:1276px;top:385px;width:12px;height:1px;background:#a8a8a8"></div>
<div class="a" style="left:1254px;top:407px;width:34px;height:1px;background:#a8a8a8"></div>
<div class="a" style="left:1301px;top:429px;width:140px;height:1px;background:#b0b0b0"></div>
<div class="a" style="left:1301px;top:451px;width:140px;height:1px;background:#b0b0b0"></div>
<div class="a" style="left:1257px;top:411px;font-size:17px;line-height:20px;transform:scaleX(0.87);transform-origin:0 0">10</div>
<div class="a" style="left:1278px;top:415px;font-size:8px;line-height:9px;letter-spacing:-0.3px">00</div>
<div class="a" style="left:1276px;top:429px;width:12px;height:1px;background:#a8a8a8"></div>
<div class="a" style="left:1254px;top:451px;width:34px;height:1px;background:#a8a8a8"></div>
<div class="a" style="left:1301px;top:473px;width:140px;height:1px;background:#b0b0b0"></div>
<div class="a" style="left:1301px;top:495px;width:140px;height:1px;background:#b0b0b0"></div>
<div class="a" style="left:1257px;top:455px;font-size:17px;line-height:20px;transform:scaleX(0.87);transform-origin:0 0">11</div>
<div class="a" style="left:1278px;top:459px;font-size:8px;line-height:9px;letter-spacing:-0.3px">00</div>
<div class="a" style="left:1276px;top:473px;width:12px;height:1px;background:#a8a8a8"></div>
<div class="a" style="left:1254px;top:495px;width:34px;height:1px;background:#a8a8a8"></div>
<div class="a" style="left:1301px;top:517px;width:140px;height:1px;background:#b0b0b0"></div>
<div class="a" style="left:1301px;top:539px;width:140px;height:1px;background:#b0b0b0"></div>
<div class="a" style="left:1257px;top:499px;font-size:17px;line-height:20px;transform:scaleX(0.87);transform-origin:0 0">12</div>
<div class="a" style="left:1278px;top:503px;font-size:8px;line-height:9px;letter-spacing:-0.3px">00</div>
<div class="a" style="left:1276px;top:517px;width:12px;height:1px;background:#a8a8a8"></div>
<div class="a" style="left:1254px;top:539px;width:34px;height:1px;background:#a8a8a8"></div>
<div class="a" style="left:1301px;top:561px;width:140px;height:1px;background:#b0b0b0"></div>
<div class="a" style="left:1301px;top:583px;width:140px;height:1px;background:#b0b0b0"></div>
<div class="a" style="left:1257px;top:543px;font-size:17px;line-height:20px;transform:scaleX(0.87);transform-origin:0 0">13</div>
<div class="a" style="left:1278px;top:547px;font-size:8px;line-height:9px;letter-spacing:-0.3px">00</div>
<div class="a" style="left:1276px;top:561px;width:12px;height:1px;background:#a8a8a8"></div>
<div class="a" style="left:1254px;top:583px;width:34px;height:1px;background:#a8a8a8"></div>
<div class="a" style="left:1301px;top:605px;width:140px;height:1px;background:#b0b0b0"></div>
<div class="a" style="left:1301px;top:627px;width:140px;height:1px;background:#b0b0b0"></div>
<div class="a" style="left:1257px;top:587px;font-size:17px;line-height:20px;transform:scaleX(0.87);transform-origin:0 0">14</div>
<div class="a" style="left:1278px;top:591px;font-size:8px;line-height:9px;letter-spacing:-0.3px">00</div>
<div class="a" style="left:1276px;top:605px;width:12px;height:1px;background:#a8a8a8"></div>
<div class="a" style="left:1254px;top:627px;width:34px;height:1px;background:#a8a8a8"></div>
<div class="a" style="left:1301px;top:649px;width:140px;height:1px;background:#b0b0b0"></div>
<div class="a" style="left:1301px;top:671px;width:140px;height:1px;background:#b0b0b0"></div>
<div class="a" style="left:1257px;top:631px;font-size:17px;line-height:20px;transform:scaleX(0.87);transform-origin:0 0">15</div>
<div class="a" style="left:1278px;top:635px;font-size:8px;line-height:9px;letter-spacing:-0.3px">00</div>
<div class="a" style="left:1276px;top:649px;width:12px;height:1px;background:#a8a8a8"></div>
<div class="a" style="left:1254px;top:671px;width:34px;height:1px;background:#a8a8a8"></div>
<div class="a" style="left:1301px;top:693px;width:140px;height:1px;background:#b0b0b0"></div>
<div class="a" style="left:1301px;top:715px;width:140px;height:1px;background:#b0b0b0"></div>
<div class="a" style="left:1257px;top:675px;font-size:17px;line-height:20px;transform:scaleX(0.87);transform-origin:0 0">16</div>
<div class="a" style="left:1278px;top:679px;font-size:8px;line-height:9px;letter-spacing:-0.3px">00</div>
<div class="a" style="left:1276px;top:693px;width:12px;height:1px;background:#a8a8a8"></div>
<div class="a" style="left:1254px;top:715px;width:34px;height:1px;background:#a8a8a8"></div>
<div class="a" style="left:1301px;top:737px;width:140px;height:1px;background:#b0b0b0"></div>
<div class="a" style="left:1301px;top:759px;width:140px;height:1px;background:#b0b0b0"></div>
<div class="a" style="left:1257px;top:719px;font-size:17px;line-height:20px;transform:scaleX(0.87);transform-origin:0 0">17</div>
<div class="a" style="left:1278px;top:723px;font-size:8px;line-height:9px;letter-spacing:-0.3px">00</div>
<div class="a" style="left:1276px;top:737px;width:12px;height:1px;background:#a8a8a8"></div>
<div class="a" style="left:1254px;top:759px;width:34px;height:1px;background:#a8a8a8"></div>
<div class="a" style="left:1301px;top:781px;width:140px;height:1px;background:#b0b0b0"></div>
<div class="a" style="left:1301px;top:803px;width:140px;height:1px;background:#b0b0b0"></div>
<div class="a" style="left:1257px;top:763px;font-size:17px;line-height:20px;transform:scaleX(0.87);transform-origin:0 0">18</div>
<div class="a" style="left:1278px;top:767px;font-size:8px;line-height:9px;letter-spacing:-0.3px">00</div>
<div class="a" style="left:1276px;top:781px;width:12px;height:1px;background:#a8a8a8"></div>
<div class="a" style="left:1254px;top:803px;width:34px;height:1px;background:#a8a8a8"></div>
<div class="a" style="left:1301px;top:825px;width:140px;height:1px;background:#b0b0b0"></div>
<div class="a" style="left:1301px;top:847px;width:140px;height:1px;background:#b0b0b0"></div>
<div class="a" style="left:1257px;top:807px;font-size:17px;line-height:20px;transform:scaleX(0.87);transform-origin:0 0">19</div>
<div class="a" style="left:1278px;top:811px;font-size:8px;line-height:9px;letter-spacing:-0.3px">00</div>
<div class="a" style="left:1276px;top:825px;width:12px;height:1px;background:#a8a8a8"></div>
<div class="a" style="left:1254px;top:847px;width:34px;height:1px;background:#a8a8a8"></div>
<div class="a" style="left:1250px;top:421px;width:43px;height:6px;background:linear-gradient(#f0f0f0,#c8c8c8);mix-blend-mode:multiply"></div>
<div class="a" style="left:1250px;top:826px;width:208px;height:4px;background:#2b579a"></div>
